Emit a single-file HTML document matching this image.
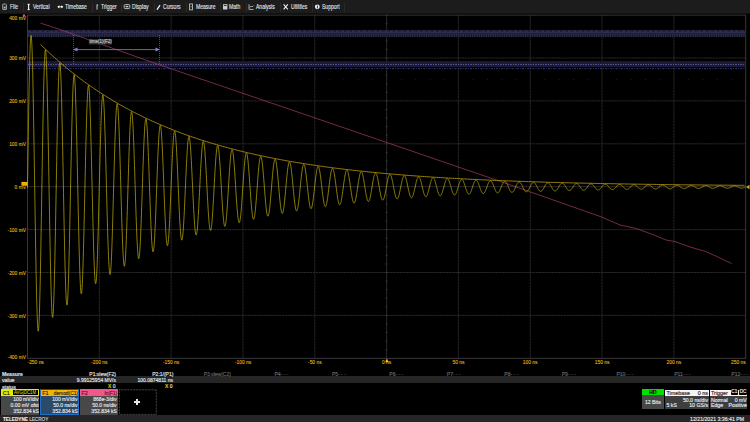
<!DOCTYPE html><html><head><meta charset="utf-8"><style>
*{margin:0;padding:0;box-sizing:border-box}
html,body{width:750px;height:422px;background:#000;overflow:hidden;font-family:"Liberation Sans",sans-serif}
.a{position:absolute;white-space:nowrap;-webkit-text-stroke:0.15px currentColor}
#menu{position:absolute;left:0;top:0;width:750px;height:13px;background:#1c1c1c}
.mi{position:absolute;top:3.1px;font-size:6.8px;color:#e8ecf0;line-height:7px;transform:scaleX(0.74);-webkit-text-stroke:0.1px currentColor;transform-origin:0 0;white-space:nowrap}
.sep{position:absolute;top:2.5px;width:0.8px;height:9px;background:#2a2a2a}
.yl{position:absolute;font-size:4.9px;color:#e4b40c;-webkit-text-stroke:0.1px currentColor;text-align:right;width:30px;line-height:5px}
.xl{position:absolute;font-size:4.9px;color:#e4b40c;-webkit-text-stroke:0.1px currentColor;text-align:center;width:40px;line-height:5px;top:360.2px}
.mt{position:absolute;font-size:5px;line-height:6px;color:#e4e8ee;-webkit-text-stroke:0.15px currentColor;text-align:right;white-space:nowrap}
</style></head><body><svg width="750" height="422" style="position:absolute;left:0;top:0"><line x1="99.32" y1="15.1" x2="99.32" y2="358.3" stroke="#2a2a2a" stroke-width="0.9" stroke-dasharray="2.6 0.5"/><line x1="171.14" y1="15.1" x2="171.14" y2="358.3" stroke="#2a2a2a" stroke-width="0.9" stroke-dasharray="2.6 0.5"/><line x1="242.96" y1="15.1" x2="242.96" y2="358.3" stroke="#2a2a2a" stroke-width="0.9" stroke-dasharray="2.6 0.5"/><line x1="314.78" y1="15.1" x2="314.78" y2="358.3" stroke="#2a2a2a" stroke-width="0.9" stroke-dasharray="2.6 0.5"/><line x1="386.60" y1="15.1" x2="386.60" y2="358.3" stroke="#2e2e2e" stroke-width="0.9"/><line x1="458.42" y1="15.1" x2="458.42" y2="358.3" stroke="#2a2a2a" stroke-width="0.9" stroke-dasharray="2.6 0.5"/><line x1="530.24" y1="15.1" x2="530.24" y2="358.3" stroke="#2a2a2a" stroke-width="0.9" stroke-dasharray="2.6 0.5"/><line x1="602.06" y1="15.1" x2="602.06" y2="358.3" stroke="#2a2a2a" stroke-width="0.9" stroke-dasharray="2.6 0.5"/><line x1="673.88" y1="15.1" x2="673.88" y2="358.3" stroke="#2a2a2a" stroke-width="0.9" stroke-dasharray="2.6 0.5"/><line x1="27.5" y1="58.00" x2="745.7" y2="58.00" stroke="#2a2a2a" stroke-width="0.9" stroke-dasharray="2.6 0.5"/><line x1="27.5" y1="100.90" x2="745.7" y2="100.90" stroke="#2a2a2a" stroke-width="0.9" stroke-dasharray="2.6 0.5"/><line x1="27.5" y1="143.80" x2="745.7" y2="143.80" stroke="#2a2a2a" stroke-width="0.9" stroke-dasharray="2.6 0.5"/><line x1="27.5" y1="186.70" x2="745.7" y2="186.70" stroke="#2e2e2e" stroke-width="0.9"/><line x1="27.5" y1="229.60" x2="745.7" y2="229.60" stroke="#2a2a2a" stroke-width="0.9" stroke-dasharray="2.6 0.5"/><line x1="27.5" y1="272.50" x2="745.7" y2="272.50" stroke="#2a2a2a" stroke-width="0.9" stroke-dasharray="2.6 0.5"/><line x1="27.5" y1="315.40" x2="745.7" y2="315.40" stroke="#2a2a2a" stroke-width="0.9" stroke-dasharray="2.6 0.5"/><line x1="27.50" y1="185.40" x2="27.50" y2="188.00" stroke="#3a3a3a" stroke-width="0.6"/><line x1="41.86" y1="185.40" x2="41.86" y2="188.00" stroke="#3a3a3a" stroke-width="0.6"/><line x1="56.23" y1="185.40" x2="56.23" y2="188.00" stroke="#3a3a3a" stroke-width="0.6"/><line x1="70.59" y1="185.40" x2="70.59" y2="188.00" stroke="#3a3a3a" stroke-width="0.6"/><line x1="84.96" y1="185.40" x2="84.96" y2="188.00" stroke="#3a3a3a" stroke-width="0.6"/><line x1="99.32" y1="185.40" x2="99.32" y2="188.00" stroke="#3a3a3a" stroke-width="0.6"/><line x1="113.68" y1="185.40" x2="113.68" y2="188.00" stroke="#3a3a3a" stroke-width="0.6"/><line x1="128.05" y1="185.40" x2="128.05" y2="188.00" stroke="#3a3a3a" stroke-width="0.6"/><line x1="142.41" y1="185.40" x2="142.41" y2="188.00" stroke="#3a3a3a" stroke-width="0.6"/><line x1="156.78" y1="185.40" x2="156.78" y2="188.00" stroke="#3a3a3a" stroke-width="0.6"/><line x1="171.14" y1="185.40" x2="171.14" y2="188.00" stroke="#3a3a3a" stroke-width="0.6"/><line x1="185.50" y1="185.40" x2="185.50" y2="188.00" stroke="#3a3a3a" stroke-width="0.6"/><line x1="199.87" y1="185.40" x2="199.87" y2="188.00" stroke="#3a3a3a" stroke-width="0.6"/><line x1="214.23" y1="185.40" x2="214.23" y2="188.00" stroke="#3a3a3a" stroke-width="0.6"/><line x1="228.60" y1="185.40" x2="228.60" y2="188.00" stroke="#3a3a3a" stroke-width="0.6"/><line x1="242.96" y1="185.40" x2="242.96" y2="188.00" stroke="#3a3a3a" stroke-width="0.6"/><line x1="257.32" y1="185.40" x2="257.32" y2="188.00" stroke="#3a3a3a" stroke-width="0.6"/><line x1="271.69" y1="185.40" x2="271.69" y2="188.00" stroke="#3a3a3a" stroke-width="0.6"/><line x1="286.05" y1="185.40" x2="286.05" y2="188.00" stroke="#3a3a3a" stroke-width="0.6"/><line x1="300.42" y1="185.40" x2="300.42" y2="188.00" stroke="#3a3a3a" stroke-width="0.6"/><line x1="314.78" y1="185.40" x2="314.78" y2="188.00" stroke="#3a3a3a" stroke-width="0.6"/><line x1="329.14" y1="185.40" x2="329.14" y2="188.00" stroke="#3a3a3a" stroke-width="0.6"/><line x1="343.51" y1="185.40" x2="343.51" y2="188.00" stroke="#3a3a3a" stroke-width="0.6"/><line x1="357.87" y1="185.40" x2="357.87" y2="188.00" stroke="#3a3a3a" stroke-width="0.6"/><line x1="372.24" y1="185.40" x2="372.24" y2="188.00" stroke="#3a3a3a" stroke-width="0.6"/><line x1="386.60" y1="185.40" x2="386.60" y2="188.00" stroke="#3a3a3a" stroke-width="0.6"/><line x1="400.96" y1="185.40" x2="400.96" y2="188.00" stroke="#3a3a3a" stroke-width="0.6"/><line x1="415.33" y1="185.40" x2="415.33" y2="188.00" stroke="#3a3a3a" stroke-width="0.6"/><line x1="429.69" y1="185.40" x2="429.69" y2="188.00" stroke="#3a3a3a" stroke-width="0.6"/><line x1="444.06" y1="185.40" x2="444.06" y2="188.00" stroke="#3a3a3a" stroke-width="0.6"/><line x1="458.42" y1="185.40" x2="458.42" y2="188.00" stroke="#3a3a3a" stroke-width="0.6"/><line x1="472.78" y1="185.40" x2="472.78" y2="188.00" stroke="#3a3a3a" stroke-width="0.6"/><line x1="487.15" y1="185.40" x2="487.15" y2="188.00" stroke="#3a3a3a" stroke-width="0.6"/><line x1="501.51" y1="185.40" x2="501.51" y2="188.00" stroke="#3a3a3a" stroke-width="0.6"/><line x1="515.88" y1="185.40" x2="515.88" y2="188.00" stroke="#3a3a3a" stroke-width="0.6"/><line x1="530.24" y1="185.40" x2="530.24" y2="188.00" stroke="#3a3a3a" stroke-width="0.6"/><line x1="544.60" y1="185.40" x2="544.60" y2="188.00" stroke="#3a3a3a" stroke-width="0.6"/><line x1="558.97" y1="185.40" x2="558.97" y2="188.00" stroke="#3a3a3a" stroke-width="0.6"/><line x1="573.33" y1="185.40" x2="573.33" y2="188.00" stroke="#3a3a3a" stroke-width="0.6"/><line x1="587.70" y1="185.40" x2="587.70" y2="188.00" stroke="#3a3a3a" stroke-width="0.6"/><line x1="602.06" y1="185.40" x2="602.06" y2="188.00" stroke="#3a3a3a" stroke-width="0.6"/><line x1="616.42" y1="185.40" x2="616.42" y2="188.00" stroke="#3a3a3a" stroke-width="0.6"/><line x1="630.79" y1="185.40" x2="630.79" y2="188.00" stroke="#3a3a3a" stroke-width="0.6"/><line x1="645.15" y1="185.40" x2="645.15" y2="188.00" stroke="#3a3a3a" stroke-width="0.6"/><line x1="659.52" y1="185.40" x2="659.52" y2="188.00" stroke="#3a3a3a" stroke-width="0.6"/><line x1="673.88" y1="185.40" x2="673.88" y2="188.00" stroke="#3a3a3a" stroke-width="0.6"/><line x1="688.24" y1="185.40" x2="688.24" y2="188.00" stroke="#3a3a3a" stroke-width="0.6"/><line x1="702.61" y1="185.40" x2="702.61" y2="188.00" stroke="#3a3a3a" stroke-width="0.6"/><line x1="716.97" y1="185.40" x2="716.97" y2="188.00" stroke="#3a3a3a" stroke-width="0.6"/><line x1="731.34" y1="185.40" x2="731.34" y2="188.00" stroke="#3a3a3a" stroke-width="0.6"/><line x1="745.70" y1="185.40" x2="745.70" y2="188.00" stroke="#3a3a3a" stroke-width="0.6"/><line x1="385.30" y1="15.10" x2="387.90" y2="15.10" stroke="#3a3a3a" stroke-width="0.6"/><line x1="385.30" y1="23.68" x2="387.90" y2="23.68" stroke="#3a3a3a" stroke-width="0.6"/><line x1="385.30" y1="32.26" x2="387.90" y2="32.26" stroke="#3a3a3a" stroke-width="0.6"/><line x1="385.30" y1="40.84" x2="387.90" y2="40.84" stroke="#3a3a3a" stroke-width="0.6"/><line x1="385.30" y1="49.42" x2="387.90" y2="49.42" stroke="#3a3a3a" stroke-width="0.6"/><line x1="385.30" y1="58.00" x2="387.90" y2="58.00" stroke="#3a3a3a" stroke-width="0.6"/><line x1="385.30" y1="66.58" x2="387.90" y2="66.58" stroke="#3a3a3a" stroke-width="0.6"/><line x1="385.30" y1="75.16" x2="387.90" y2="75.16" stroke="#3a3a3a" stroke-width="0.6"/><line x1="385.30" y1="83.74" x2="387.90" y2="83.74" stroke="#3a3a3a" stroke-width="0.6"/><line x1="385.30" y1="92.32" x2="387.90" y2="92.32" stroke="#3a3a3a" stroke-width="0.6"/><line x1="385.30" y1="100.90" x2="387.90" y2="100.90" stroke="#3a3a3a" stroke-width="0.6"/><line x1="385.30" y1="109.48" x2="387.90" y2="109.48" stroke="#3a3a3a" stroke-width="0.6"/><line x1="385.30" y1="118.06" x2="387.90" y2="118.06" stroke="#3a3a3a" stroke-width="0.6"/><line x1="385.30" y1="126.64" x2="387.90" y2="126.64" stroke="#3a3a3a" stroke-width="0.6"/><line x1="385.30" y1="135.22" x2="387.90" y2="135.22" stroke="#3a3a3a" stroke-width="0.6"/><line x1="385.30" y1="143.80" x2="387.90" y2="143.80" stroke="#3a3a3a" stroke-width="0.6"/><line x1="385.30" y1="152.38" x2="387.90" y2="152.38" stroke="#3a3a3a" stroke-width="0.6"/><line x1="385.30" y1="160.96" x2="387.90" y2="160.96" stroke="#3a3a3a" stroke-width="0.6"/><line x1="385.30" y1="169.54" x2="387.90" y2="169.54" stroke="#3a3a3a" stroke-width="0.6"/><line x1="385.30" y1="178.12" x2="387.90" y2="178.12" stroke="#3a3a3a" stroke-width="0.6"/><line x1="385.30" y1="186.70" x2="387.90" y2="186.70" stroke="#3a3a3a" stroke-width="0.6"/><line x1="385.30" y1="195.28" x2="387.90" y2="195.28" stroke="#3a3a3a" stroke-width="0.6"/><line x1="385.30" y1="203.86" x2="387.90" y2="203.86" stroke="#3a3a3a" stroke-width="0.6"/><line x1="385.30" y1="212.44" x2="387.90" y2="212.44" stroke="#3a3a3a" stroke-width="0.6"/><line x1="385.30" y1="221.02" x2="387.90" y2="221.02" stroke="#3a3a3a" stroke-width="0.6"/><line x1="385.30" y1="229.60" x2="387.90" y2="229.60" stroke="#3a3a3a" stroke-width="0.6"/><line x1="385.30" y1="238.18" x2="387.90" y2="238.18" stroke="#3a3a3a" stroke-width="0.6"/><line x1="385.30" y1="246.76" x2="387.90" y2="246.76" stroke="#3a3a3a" stroke-width="0.6"/><line x1="385.30" y1="255.34" x2="387.90" y2="255.34" stroke="#3a3a3a" stroke-width="0.6"/><line x1="385.30" y1="263.92" x2="387.90" y2="263.92" stroke="#3a3a3a" stroke-width="0.6"/><line x1="385.30" y1="272.50" x2="387.90" y2="272.50" stroke="#3a3a3a" stroke-width="0.6"/><line x1="385.30" y1="281.08" x2="387.90" y2="281.08" stroke="#3a3a3a" stroke-width="0.6"/><line x1="385.30" y1="289.66" x2="387.90" y2="289.66" stroke="#3a3a3a" stroke-width="0.6"/><line x1="385.30" y1="298.24" x2="387.90" y2="298.24" stroke="#3a3a3a" stroke-width="0.6"/><line x1="385.30" y1="306.82" x2="387.90" y2="306.82" stroke="#3a3a3a" stroke-width="0.6"/><line x1="385.30" y1="315.40" x2="387.90" y2="315.40" stroke="#3a3a3a" stroke-width="0.6"/><line x1="385.30" y1="323.98" x2="387.90" y2="323.98" stroke="#3a3a3a" stroke-width="0.6"/><line x1="385.30" y1="332.56" x2="387.90" y2="332.56" stroke="#3a3a3a" stroke-width="0.6"/><line x1="385.30" y1="341.14" x2="387.90" y2="341.14" stroke="#3a3a3a" stroke-width="0.6"/><line x1="385.30" y1="349.72" x2="387.90" y2="349.72" stroke="#3a3a3a" stroke-width="0.6"/><line x1="385.30" y1="358.30" x2="387.90" y2="358.30" stroke="#3a3a3a" stroke-width="0.6"/><line x1="27.5" y1="79.4" x2="745.7" y2="79.4" stroke="#262626" stroke-width="0.9" stroke-dasharray="0.9 13.46"/><rect x="27.5" y="15.1" width="718.20" height="343.20" fill="none" stroke="#3c3c3c" stroke-width="0.9"/><rect x="28.0" y="29.9" width="717.20" height="7.2" fill="#16162a"/><line x1="28.0" y1="31.2" x2="745.2" y2="31.2" stroke="#2e2e4e" stroke-width="2.1" stroke-dasharray="3 0.8 0.8 0.8"/><line x1="28.0" y1="32.8" x2="745.2" y2="32.8" stroke="#36365a" stroke-width="1"/><line x1="28.0" y1="35.2" x2="745.2" y2="35.2" stroke="#2c2c4c" stroke-width="3.0" stroke-dasharray="1.3 1.0"/><rect x="28.0" y="61.1" width="717.20" height="6.0" fill="#1a1a34"/><line x1="28.0" y1="64.5" x2="745.2" y2="64.5" stroke="#5a5a98" stroke-width="1" stroke-dasharray="1 1.2 1.6 1.2"/><line x1="28.0" y1="68.6" x2="745.2" y2="68.6" stroke="#3e3e84" stroke-width="0.9" stroke-dasharray="2 1.2 0.8 1.2"/><polyline fill="none" stroke="#b03f72" stroke-width="0.65" points="40.6,23.1 60.0,29.5 150.0,61.6 300.0,112.8 386.7,142.5 500.0,181.3 600.0,216.4 620.0,225.0 636.0,228.4 654.0,235.0 666.0,240.0 675.0,241.6 690.0,247.0 706.0,251.6 720.0,258.0 731.6,263.6"/><polyline fill="none" stroke="#c0b008" stroke-width="0.72" points="27.50,187.77 27.70,174.19 27.90,160.75 28.10,147.55 28.30,134.69 28.50,122.26 28.70,110.36 28.90,99.09 29.10,88.51 29.30,78.72 29.50,69.78 29.70,61.77 29.90,54.74 30.10,48.73 30.30,43.81 30.50,39.99 30.70,37.30 30.90,35.77 31.10,35.40 31.30,36.19 31.50,38.13 31.70,41.21 31.90,45.39 32.10,50.64 32.30,56.93 32.50,64.18 32.70,72.36 32.90,81.40 33.10,91.21 33.30,101.73 33.50,112.88 33.70,124.56 33.90,136.68 34.10,149.16 34.30,161.89 34.50,174.78 34.70,187.73 34.90,200.63 35.10,213.40 35.30,225.92 35.50,238.12 35.70,249.89 35.90,261.14 36.10,271.80 36.30,281.78 36.50,291.01 36.70,299.41 36.90,306.93 37.10,313.52 37.30,319.11 37.50,323.69 37.70,327.20 37.90,329.63 38.10,330.96 38.30,331.19 38.50,330.31 38.70,328.34 38.90,325.30 39.10,321.20 39.30,316.09 39.50,310.01 39.70,303.00 39.90,295.13 40.10,286.45 40.30,277.03 40.50,266.95 40.70,256.29 40.90,245.12 41.10,233.55 41.30,221.64 41.50,209.51 41.70,197.24 41.90,184.92 42.10,172.66 42.30,160.53 42.50,148.65 42.70,137.09 42.90,125.94 43.10,115.30 43.30,105.23 43.50,95.81 43.70,87.12 43.90,79.21 44.10,72.16 44.30,66.00 44.50,60.78 44.70,56.54 44.90,53.32 45.10,51.12 45.30,49.97 45.50,49.87 45.70,50.82 45.90,52.81 46.10,55.82 46.30,59.83 46.50,64.80 46.70,70.69 46.90,77.45 47.10,85.03 47.30,93.37 47.50,102.40 47.70,112.06 47.90,122.26 48.10,132.93 48.30,143.98 48.50,155.33 48.70,166.89 48.90,178.58 49.10,190.29 49.30,201.95 49.50,213.46 49.70,224.74 49.90,235.70 50.10,246.25 50.30,256.32 50.50,265.83 50.70,274.72 50.90,282.90 51.10,290.34 51.30,296.96 51.50,302.72 51.70,307.58 51.90,311.50 52.10,314.46 52.30,316.44 52.50,317.42 52.70,317.40 52.90,316.38 53.10,314.38 53.30,311.41 53.50,307.49 53.70,302.67 53.90,296.97 54.10,290.45 54.30,283.15 54.50,275.14 54.70,266.47 54.90,257.23 55.10,247.47 55.30,237.27 55.50,226.72 55.70,215.90 55.90,204.88 56.10,193.76 56.30,182.62 56.50,171.54 56.70,160.61 56.90,149.91 57.10,139.53 57.30,129.53 57.50,120.01 57.70,111.02 57.90,102.64 58.10,94.93 58.30,87.95 58.50,81.74 58.70,76.35 58.90,71.83 59.10,68.20 59.30,65.49 59.50,63.71 59.70,62.88 59.90,63.01 60.10,64.08 60.30,66.09 60.50,69.02 60.70,72.85 60.90,77.53 61.10,83.04 61.30,89.34 61.50,96.36 61.70,104.05 61.90,112.36 62.10,121.21 62.30,130.55 62.50,140.29 62.70,150.36 62.90,160.68 63.10,171.18 63.30,181.76 63.50,192.36 63.70,202.89 63.90,213.27 64.10,223.41 64.30,233.25 64.50,242.71 64.70,251.72 64.90,260.20 65.10,268.11 65.30,275.37 65.50,281.93 65.70,287.75 65.90,292.79 66.10,297.00 66.30,300.35 66.50,302.83 66.70,304.42 66.90,305.10 67.10,304.88 67.30,303.76 67.50,301.75 67.70,298.87 67.90,295.13 68.10,290.59 68.30,285.26 68.50,279.19 68.70,272.44 68.90,265.05 69.10,257.08 69.30,248.61 69.50,239.68 69.70,230.37 69.90,220.76 70.10,210.92 70.30,200.92 70.50,190.85 70.70,180.77 70.90,170.77 71.10,160.91 71.30,151.29 71.50,141.97 71.70,133.01 71.90,124.50 72.10,116.48 72.30,109.03 72.50,102.20 72.70,96.03 72.90,90.58 73.10,85.87 73.30,81.96 73.50,78.86 73.70,76.59 73.90,75.18 74.10,74.63 74.30,74.93 74.50,76.10 74.70,78.10 74.90,80.94 75.10,84.58 75.30,88.99 75.50,94.14 75.70,99.99 75.90,106.48 76.10,113.58 76.30,121.21 76.50,129.33 76.70,137.86 76.90,146.75 77.10,155.92 77.30,165.31 77.50,174.83 77.70,184.42 77.90,194.00 78.10,203.51 78.30,212.86 78.50,221.98 78.70,230.82 78.90,239.29 79.10,247.34 79.30,254.91 79.50,261.93 79.70,268.37 79.90,274.16 80.10,279.27 80.30,283.66 80.50,287.30 80.70,290.16 80.90,292.22 81.10,293.48 81.30,293.91 81.50,293.53 81.70,292.33 81.90,290.33 82.10,287.54 82.30,284.00 82.50,279.72 82.70,274.74 82.90,269.11 83.10,262.87 83.30,256.06 83.50,248.74 83.70,240.97 83.90,232.81 84.10,224.32 84.30,215.57 84.50,206.62 84.70,197.55 84.90,188.43 85.10,179.31 85.30,170.29 85.50,161.41 85.70,152.76 85.90,144.39 86.10,136.37 86.30,128.76 86.50,121.62 86.70,115.00 86.90,108.94 87.10,103.50 87.30,98.72 87.50,94.62 87.70,91.24 87.90,88.60 88.10,86.73 88.30,85.62 88.50,85.30 88.70,85.75 88.90,86.97 89.10,88.96 89.30,91.69 89.50,95.15 89.70,99.29 89.90,104.10 90.10,109.53 90.30,115.53 90.50,122.07 90.70,129.08 90.90,136.51 91.10,144.32 91.30,152.42 91.50,160.77 91.70,169.30 91.90,177.94 92.10,186.62 92.30,195.28 92.50,203.86 92.70,212.28 92.90,220.48 93.10,228.41 93.30,236.00 93.50,243.19 93.70,249.93 93.90,256.17 94.10,261.87 94.30,266.97 94.50,271.46 94.70,275.28 94.90,278.41 95.10,280.84 95.30,282.55 95.50,283.51 95.70,283.74 95.90,283.23 96.10,281.98 96.30,280.01 96.50,277.33 96.70,273.97 96.90,269.95 97.10,265.31 97.30,260.09 97.50,254.31 97.70,248.04 97.90,241.33 98.10,234.21 98.30,226.75 98.50,219.01 98.70,211.05 98.90,202.92 99.10,194.69 99.30,186.43 99.50,178.20 99.70,170.05 99.90,162.06 100.10,154.28 100.30,146.78 100.50,139.60 100.70,132.80 100.90,126.44 101.10,120.56 101.30,115.20 101.50,110.41 101.70,106.22 101.90,102.65 102.10,99.74 102.30,97.51 102.50,95.97 102.70,95.13 102.90,94.99 103.10,95.56 103.30,96.82 103.50,98.77 103.70,101.40 103.90,104.66 104.10,108.55 104.30,113.03 104.50,118.07 104.70,123.61 104.90,129.63 105.10,136.06 105.30,142.87 105.50,150.00 105.70,157.39 105.90,164.99 106.10,172.73 106.30,180.56 106.50,188.42 106.70,196.25 106.90,203.98 107.10,211.57 107.30,218.94 107.50,226.05 107.70,232.84 107.90,239.26 108.10,245.26 108.30,250.81 108.50,255.84 108.70,260.34 108.90,264.26 109.10,267.58 109.30,270.28 109.50,272.33 109.70,273.72 109.90,274.45 110.10,274.50 110.30,273.89 110.50,272.61 110.70,270.68 110.90,268.12 111.10,264.94 111.30,261.18 111.50,256.85 111.70,252.01 111.90,246.68 112.10,240.91 112.30,234.74 112.50,228.23 112.70,221.42 112.90,214.36 113.10,207.12 113.30,199.74 113.50,192.28 113.70,184.81 113.90,177.37 114.10,170.02 114.30,162.83 114.50,155.84 114.70,149.11 114.90,142.69 115.10,136.62 115.30,130.96 115.50,125.74 115.70,121.00 115.90,116.78 116.10,113.11 116.30,110.02 116.50,107.52 116.70,105.64 116.90,104.39 117.10,103.77 117.30,103.79 117.50,104.45 117.70,105.73 117.90,107.64 118.10,110.14 118.30,113.23 118.50,116.87 118.70,121.04 118.90,125.70 119.10,130.82 119.30,136.36 119.50,142.26 119.70,148.49 119.90,155.00 120.10,161.74 120.30,168.65 120.50,175.68 120.70,182.78 120.90,189.89 121.10,196.96 121.30,203.93 121.50,210.75 121.70,217.38 121.90,223.75 122.10,229.82 122.30,235.55 122.50,240.90 122.70,245.81 122.90,250.26 123.10,254.22 123.30,257.65 123.50,260.53 123.70,262.84 123.90,264.56 124.10,265.69 124.30,266.21 124.50,266.12 124.70,265.43 124.90,264.14 125.10,262.26 125.30,259.81 125.50,256.81 125.70,253.29 125.90,249.27 126.10,244.79 126.30,239.87 126.50,234.56 126.70,228.91 126.90,222.95 127.10,216.73 127.30,210.30 127.50,203.71 127.70,197.01 127.90,190.26 128.10,183.49 128.30,176.78 128.50,170.16 128.70,163.68 128.90,157.41 129.10,151.37 129.30,145.63 129.50,140.22 129.70,135.18 129.90,130.55 130.10,126.37 130.30,122.66 130.50,119.46 130.70,116.78 130.90,114.64 131.10,113.07 131.30,112.06 131.50,111.63 131.70,111.78 131.90,112.50 132.10,113.79 132.30,115.64 132.50,118.03 132.70,120.94 132.90,124.34 133.10,128.22 133.30,132.53 133.50,137.25 133.70,142.34 133.90,147.76 134.10,153.46 134.30,159.40 134.50,165.53 134.70,171.81 134.90,178.20 135.10,184.63 135.30,191.06 135.50,197.44 135.70,203.72 135.90,209.86 136.10,215.81 136.30,221.52 136.50,226.95 136.70,232.06 136.90,236.81 137.10,241.17 137.30,245.10 137.50,248.57 137.70,251.57 137.90,254.06 138.10,256.03 138.30,257.47 138.50,258.36 138.70,258.71 138.90,258.51 139.10,257.76 139.30,256.47 139.50,254.66 139.70,252.33 139.90,249.51 140.10,246.21 140.30,242.48 140.50,238.33 140.70,233.80 140.90,228.92 141.10,223.74 141.30,218.29 141.50,212.61 141.70,206.76 141.90,200.77 142.10,194.69 142.30,188.57 142.50,182.45 142.70,176.39 142.90,170.43 143.10,164.60 143.30,158.97 143.50,153.56 143.70,148.43 143.90,143.61 144.10,139.13 144.30,135.03 144.50,131.34 144.70,128.08 144.90,125.29 145.10,122.97 145.30,121.15 145.50,119.84 145.70,119.05 145.90,118.78 146.10,119.03 146.30,119.80 146.50,121.08 146.70,122.86 146.90,125.13 147.10,127.87 147.30,131.05 147.50,134.65 147.70,138.64 147.90,142.99 148.10,147.66 148.30,152.62 148.50,157.83 148.70,163.25 148.90,168.84 149.10,174.55 149.30,180.34 149.50,186.16 149.70,191.98 149.90,197.74 150.10,203.40 150.30,208.92 150.50,214.26 150.70,219.37 150.90,224.22 151.10,228.78 151.30,233.00 151.50,236.86 151.70,240.32 151.90,243.37 152.10,245.98 152.30,248.13 152.50,249.81 152.70,251.00 152.90,251.70 153.10,251.90 153.30,251.61 153.50,250.82 153.70,249.54 153.90,247.79 154.10,245.58 154.30,242.93 154.50,239.86 154.70,236.39 154.90,232.56 155.10,228.38 155.30,223.90 155.50,219.16 155.70,214.17 155.90,209.00 156.10,203.67 156.30,198.23 156.50,192.71 156.70,187.17 156.90,181.65 157.10,176.17 157.30,170.80 157.50,165.57 157.70,160.51 157.90,155.67 158.10,151.09 158.30,146.79 158.50,142.81 158.70,139.18 158.90,135.93 159.10,133.07 159.30,130.64 159.50,128.64 159.70,127.10 159.90,126.02 160.10,125.41 160.30,125.27 160.50,125.60 160.70,126.40 160.90,127.67 161.10,129.38 161.30,131.53 161.50,134.10 161.70,137.07 161.90,140.40 162.10,144.09 162.30,148.10 162.50,152.39 162.70,156.93 162.90,161.69 163.10,166.64 163.30,171.72 163.50,176.91 163.70,182.16 163.90,187.43 164.10,192.68 164.30,197.88 164.50,202.98 164.70,207.94 164.90,212.73 165.10,217.31 165.30,221.64 165.50,225.69 165.70,229.44 165.90,232.86 166.10,235.91 166.30,238.58 166.50,240.85 166.70,242.70 166.90,244.12 167.10,245.10 167.30,245.63 167.50,245.71 167.70,245.35 167.90,244.53 168.10,243.28 168.30,241.60 168.50,239.51 168.70,237.03 168.90,234.16 169.10,230.95 169.30,227.41 169.50,223.56 169.70,219.45 169.90,215.10 170.10,210.55 170.30,205.83 170.50,200.99 170.70,196.04 170.90,191.04 171.10,186.03 171.30,181.03 171.50,176.10 171.70,171.26 171.90,166.56 172.10,162.02 172.30,157.69 172.50,153.60 172.70,149.77 172.90,146.24 173.10,143.03 173.30,140.16 173.50,137.67 173.70,135.55 173.90,133.84 174.10,132.53 174.30,131.65 174.50,131.19 174.70,131.16 174.90,131.56 175.10,132.38 175.30,133.62 175.50,135.26 175.70,137.29 175.90,139.70 176.10,142.46 176.30,145.56 176.50,148.96 176.70,152.64 176.90,156.58 177.10,160.74 177.30,165.09 177.50,169.60 177.70,174.22 177.90,178.93 178.10,183.69 178.30,188.46 178.50,193.21 178.70,197.89 178.90,202.48 179.10,206.94 179.30,211.23 179.50,215.33 179.70,219.20 179.90,222.81 180.10,226.13 180.30,229.15 180.50,231.84 180.70,234.18 180.90,236.15 181.10,237.73 181.30,238.93 181.50,239.73 181.70,240.12 181.90,240.10 182.10,239.67 182.30,238.85 182.50,237.63 182.70,236.02 182.90,234.05 183.10,231.72 183.30,229.06 183.50,226.08 183.70,222.81 183.90,219.27 184.10,215.50 184.30,211.52 184.50,207.37 184.70,203.07 184.90,198.66 185.10,194.17 185.30,189.64 185.50,185.10 185.70,180.59 185.90,176.14 186.10,171.79 186.30,167.56 186.50,163.50 186.70,159.63 186.90,155.97 187.10,152.57 187.30,149.43 187.50,146.60 187.70,144.08 187.90,141.89 188.10,140.06 188.30,138.59 188.50,137.49 188.70,136.78 188.90,136.45 189.10,136.51 189.30,136.96 189.50,137.79 189.70,138.99 189.90,140.56 190.10,142.47 190.30,144.73 190.50,147.30 190.70,150.16 190.90,153.30 191.10,156.69 191.30,160.30 191.50,164.11 191.70,168.08 191.90,172.18 192.10,176.39 192.30,180.66 192.50,184.98 192.70,189.29 192.90,193.58 193.10,197.80 193.30,201.93 193.50,205.93 193.70,209.78 193.90,213.44 194.10,216.89 194.30,220.11 194.50,223.06 194.70,225.72 194.90,228.08 195.10,230.13 195.30,231.83 195.50,233.19 195.70,234.19 195.90,234.83 196.10,235.10 196.30,235.00 196.50,234.53 196.70,233.70 196.90,232.52 197.10,230.99 197.30,229.13 197.50,226.95 197.70,224.48 197.90,221.72 198.10,218.71 198.30,215.46 198.50,212.00 198.70,208.36 198.90,204.57 199.10,200.65 199.30,196.64 199.50,192.57 199.70,188.46 199.90,184.36 200.10,180.29 200.30,176.28 200.50,172.36 200.70,168.57 200.90,164.93 201.10,161.46 201.30,158.21 201.50,155.18 201.70,152.40 201.90,149.90 202.10,147.68 202.30,145.78 202.50,144.19 202.70,142.93 202.90,142.02 203.10,141.45 203.30,141.24 203.50,141.37 203.70,141.85 203.90,142.68 204.10,143.84 204.30,145.33 204.50,147.14 204.70,149.24 204.90,151.63 205.10,154.28 205.30,157.17 205.50,160.29 205.70,163.60 205.90,167.08 206.10,170.70 206.30,174.44 206.50,178.26 206.70,182.14 206.90,186.05 207.10,189.95 207.30,193.82 207.50,197.62 207.70,201.34 207.90,204.93 208.10,208.38 208.30,211.65 208.50,214.73 208.70,217.58 208.90,220.20 209.10,222.55 209.30,224.62 209.50,226.40 209.70,227.88 209.90,229.03 210.10,229.87 210.30,230.37 210.50,230.54 210.70,230.37 210.90,229.88 211.10,229.05 211.30,227.91 211.50,226.46 211.70,224.71 211.90,222.68 212.10,220.38 212.30,217.83 212.50,215.05 212.70,212.06 212.90,208.90 213.10,205.57 213.30,202.11 213.50,198.54 213.70,194.90 213.90,191.20 214.10,187.49 214.30,183.78 214.50,180.10 214.70,176.49 214.90,172.97 215.10,169.56 215.30,166.30 215.50,163.21 215.70,160.31 215.90,157.61 216.10,155.15 216.30,152.95 216.50,151.00 216.70,149.34 216.90,147.97 217.10,146.91 217.30,146.15 217.50,145.71 217.70,145.58 217.90,145.78 218.10,146.28 218.30,147.10 218.50,148.22 218.70,149.63 218.90,151.33 219.10,153.29 219.30,155.51 219.50,157.96 219.70,160.63 219.90,163.49 220.10,166.52 220.30,169.70 220.50,173.00 220.70,176.41 220.90,179.88 221.10,183.40 221.30,186.93 221.50,190.46 221.70,193.95 221.90,197.38 222.10,200.72 222.30,203.94 222.50,207.03 222.70,209.95 222.90,212.69 223.10,215.23 223.30,217.54 223.50,219.62 223.70,221.43 223.90,222.98 224.10,224.25 224.30,225.24 224.50,225.92 224.70,226.31 224.90,226.39 225.10,226.18 225.30,225.66 225.50,224.85 225.70,223.75 225.90,222.38 226.10,220.74 226.30,218.84 226.50,216.71 226.70,214.35 226.90,211.79 227.10,209.05 227.30,206.15 227.50,203.11 227.70,199.96 227.90,196.71 228.10,193.40 228.30,190.05 228.50,186.68 228.70,183.33 228.90,180.02 229.10,176.76 229.30,173.60 229.50,170.55 229.70,167.63 229.90,164.86 230.10,162.28 230.30,159.89 230.50,157.71 230.70,155.76 230.90,154.06 231.10,152.62 231.30,151.44 231.50,150.54 231.70,149.92 231.90,149.58 232.10,149.53 232.30,149.77 232.50,150.29 232.70,151.10 232.90,152.17 233.10,153.51 233.30,155.10 233.50,156.93 233.70,158.98 233.90,161.25 234.10,163.70 234.30,166.32 234.50,169.10 234.70,172.01 234.90,175.02 235.10,178.11 235.30,181.27 235.50,184.46 235.70,187.66 235.90,190.85 236.10,193.99 236.30,197.08 236.50,200.08 236.70,202.97 236.90,205.73 237.10,208.35 237.30,210.79 237.50,213.04 237.70,215.08 237.90,216.91 238.10,218.50 238.30,219.85 238.50,220.94 238.70,221.77 238.90,222.33 239.10,222.62 239.30,222.63 239.50,222.37 239.70,221.85 239.90,221.05 240.10,220.00 240.30,218.70 240.50,217.16 240.70,215.40 240.90,213.42 241.10,211.25 241.30,208.89 241.50,206.38 241.70,203.72 241.90,200.95 242.10,198.07 242.30,195.12 242.50,192.11 242.70,189.07 242.90,186.03 243.10,183.00 243.30,180.01 243.50,177.08 243.70,174.24 243.90,171.50 244.10,168.89 244.30,166.42 244.50,164.12 244.70,162.00 244.90,160.08 245.10,158.37 245.30,156.88 245.50,155.62 245.70,154.61 245.90,153.85 246.10,153.35 246.30,153.10 246.50,153.12 246.70,153.39 246.90,153.92 247.10,154.70 247.30,155.73 247.50,156.99 247.70,158.48 247.90,160.19 248.10,162.09 248.30,164.18 248.50,166.43 248.70,168.84 248.90,171.38 249.10,174.04 249.30,176.78 249.50,179.60 249.70,182.46 249.90,185.35 250.10,188.25 250.30,191.13 250.50,193.96 250.70,196.74 250.90,199.44 251.10,202.03 251.30,204.50 251.50,206.83 251.70,209.00 251.90,211.00 252.10,212.81 252.30,214.41 252.50,215.80 252.70,216.97 252.90,217.90 253.10,218.60 253.30,219.05 253.50,219.26 253.70,219.22 253.90,218.93 254.10,218.40 254.30,217.63 254.50,216.62 254.70,215.40 254.90,213.96 255.10,212.31 255.30,210.48 255.50,208.48 255.70,206.31 255.90,204.01 256.10,201.58 256.30,199.04 256.50,196.42 256.70,193.74 256.90,191.01 257.10,188.26 257.30,185.50 257.50,182.77 257.70,180.07 257.90,177.44 258.10,174.89 258.30,172.43 258.50,170.10 258.70,167.90 258.90,165.85 259.10,163.97 259.30,162.27 259.50,160.76 259.70,159.46 259.90,158.38 260.10,157.51 260.30,156.88 260.50,156.48 260.70,156.31 260.90,156.37 261.10,156.67 261.30,157.20 261.50,157.96 261.70,158.94 261.90,160.13 262.10,161.52 262.30,163.10 262.50,164.87 262.70,166.79 262.90,168.87 263.10,171.08 263.30,173.40 263.50,175.82 263.70,178.32 263.90,180.88 264.10,183.48 264.30,186.10 264.50,188.72 264.70,191.32 264.90,193.87 265.10,196.37 265.30,198.79 265.50,201.11 265.70,203.32 265.90,205.40 266.10,207.33 266.30,209.10 266.50,210.70 266.70,212.11 266.90,213.32 267.10,214.33 267.30,215.13 267.50,215.71 267.70,216.07 267.90,216.20 268.10,216.12 268.30,215.81 268.50,215.27 268.70,214.53 268.90,213.58 269.10,212.42 269.30,211.08 269.50,209.55 269.70,207.86 269.90,206.01 270.10,204.02 270.30,201.91 270.50,199.68 270.70,197.37 270.90,194.99 271.10,192.54 271.30,190.07 271.50,187.58 271.70,185.09 271.90,182.62 272.10,180.19 272.30,177.82 272.50,175.53 272.70,173.33 272.90,171.24 273.10,169.28 273.30,167.46 273.50,165.80 273.70,164.30 273.90,162.98 274.10,161.84 274.30,160.90 274.50,160.17 274.70,159.64 274.90,159.32 275.10,159.22 275.30,159.32 275.50,159.64 275.70,160.17 275.90,160.90 276.10,161.83 276.30,162.95 276.50,164.25 276.70,165.72 276.90,167.35 277.10,169.12 277.30,171.03 277.50,173.05 277.70,175.18 277.90,177.39 278.10,179.66 278.30,181.99 278.50,184.35 278.70,186.72 278.90,189.09 279.10,191.43 279.30,193.73 279.50,195.98 279.70,198.15 279.90,200.23 280.10,202.21 280.30,204.06 280.50,205.77 280.70,207.34 280.90,208.75 281.10,209.98 281.30,211.04 281.50,211.91 281.70,212.59 281.90,213.07 282.10,213.35 282.30,213.43 282.50,213.30 282.70,212.98 282.90,212.45 283.10,211.74 283.30,210.83 283.50,209.75 283.70,208.49 283.90,207.08 284.10,205.51 284.30,203.81 284.50,201.98 284.70,200.05 284.90,198.01 285.10,195.91 285.30,193.73 285.50,191.52 285.70,189.27 285.90,187.01 286.10,184.76 286.30,182.54 286.50,180.35 286.70,178.22 286.90,176.16 287.10,174.19 287.30,172.33 287.50,170.58 287.70,168.97 287.90,167.49 288.10,166.17 288.30,165.01 288.50,164.03 288.70,163.22 288.90,162.59 289.10,162.16 289.30,161.91 289.50,161.86 289.70,162.00 289.90,162.33 290.10,162.85 290.30,163.56 290.50,164.44 290.70,165.49 290.90,166.70 291.10,168.06 291.30,169.57 291.50,171.20 291.70,172.95 291.90,174.80 292.10,176.74 292.30,178.76 292.50,180.83 292.70,182.94 292.90,185.08 293.10,187.23 293.30,189.37 293.50,191.48 293.70,193.56 293.90,195.58 294.10,197.52 294.30,199.39 294.50,201.15 294.70,202.80 294.90,204.32 295.10,205.71 295.30,206.95 295.50,208.03 295.70,208.95 295.90,209.70 296.10,210.27 296.30,210.67 296.50,210.88 296.70,210.91 296.90,210.75 297.10,210.42 297.30,209.90 297.50,209.22 297.70,208.36 297.90,207.34 298.10,206.18 298.30,204.86 298.50,203.42 298.70,201.85 298.90,200.17 299.10,198.40 299.30,196.54 299.50,194.62 299.70,192.65 299.90,190.63 300.10,188.60 300.30,186.55 300.50,184.52 300.70,182.51 300.90,180.54 301.10,178.63 301.30,176.78 301.50,175.02 301.70,173.36 301.90,171.80 302.10,170.37 302.30,169.06 302.50,167.90 302.70,166.89 302.90,166.03 303.10,165.33 303.30,164.81 303.50,164.45 303.70,164.27 303.90,164.26 304.10,164.43 304.30,164.77 304.50,165.28 304.70,165.95 304.90,166.78 305.10,167.76 305.30,168.89 305.50,170.16 305.70,171.54 305.90,173.05 306.10,174.65 306.30,176.35 306.50,178.12 306.70,179.96 306.90,181.84 307.10,183.76 307.30,185.70 307.50,187.64 307.70,189.58 307.90,191.48 308.10,193.35 308.30,195.16 308.50,196.91 308.70,198.58 308.90,200.15 309.10,201.62 309.30,202.97 309.50,204.19 309.70,205.29 309.90,206.23 310.10,207.03 310.30,207.67 310.50,208.16 310.70,208.48 310.90,208.63 311.10,208.62 311.30,208.44 311.50,208.10 311.70,207.60 311.90,206.95 312.10,206.14 312.30,205.19 312.50,204.10 312.70,202.88 312.90,201.55 313.10,200.11 313.30,198.57 313.50,196.94 313.70,195.25 313.90,193.50 314.10,191.70 314.30,189.87 314.50,188.03 314.70,186.18 314.90,184.34 315.10,182.53 315.30,180.76 315.50,179.04 315.70,177.39 315.90,175.81 316.10,174.33 316.30,172.94 316.50,171.67 316.70,170.52 316.90,169.50 317.10,168.61 317.30,167.87 317.50,167.27 317.70,166.83 317.90,166.54 318.10,166.41 318.30,166.44 318.50,166.63 318.70,166.97 318.90,167.46 319.10,168.11 319.30,168.89 319.50,169.81 319.70,170.86 319.90,172.03 320.10,173.31 320.30,174.69 320.50,176.17 320.70,177.72 320.90,179.34 321.10,181.01 321.30,182.72 321.50,184.46 321.70,186.22 321.90,187.98 322.10,189.72 322.30,191.44 322.50,193.12 322.70,194.75 322.90,196.32 323.10,197.81 323.30,199.21 323.50,200.51 323.70,201.71 323.90,202.79 324.10,203.75 324.30,204.58 324.50,205.27 324.70,205.82 324.90,206.23 325.10,206.48 325.30,206.59 325.50,206.54 325.70,206.35 325.90,206.01 326.10,205.52 326.30,204.90 326.50,204.14 326.70,203.25 326.90,202.24 327.10,201.11 327.30,199.88 327.50,198.55 327.70,197.14 327.90,195.66 328.10,194.11 328.30,192.52 328.50,190.88 328.70,189.23 328.90,187.55 329.10,185.88 329.30,184.23 329.50,182.59 329.70,181.00 329.90,179.46 330.10,177.97 330.30,176.57 330.50,175.24 330.70,174.01 330.90,172.88 331.10,171.87 331.30,170.97 331.50,170.19 331.70,169.55 331.90,169.04 332.10,168.68 332.30,168.45 332.50,168.36 332.70,168.42 332.90,168.62 333.10,168.96 333.30,169.44 333.50,170.05 333.70,170.79 333.90,171.65 334.10,172.62 334.30,173.70 334.50,174.89 334.70,176.16 334.90,177.51 335.10,178.92 335.30,180.40 335.50,181.92 335.70,183.48 335.90,185.06 336.10,186.65 336.30,188.24 336.50,189.82 336.70,191.36 336.90,192.88 337.10,194.34 337.30,195.74 337.50,197.07 337.70,198.32 337.90,199.48 338.10,200.54 338.30,201.50 338.50,202.34 338.70,203.06 338.90,203.66 339.10,204.13 339.30,204.46 339.50,204.66 339.70,204.73 339.90,204.66 340.10,204.45 340.30,204.12 340.50,203.65 340.70,203.05 340.90,202.34 341.10,201.51 341.30,200.57 341.50,199.53 341.70,198.39 341.90,197.18 342.10,195.88 342.30,194.53 342.50,193.12 342.70,191.66 342.90,190.18 343.10,188.67 343.30,187.16 343.50,185.65 343.70,184.15 343.90,182.68 344.10,181.25 344.30,179.87 344.50,178.54 344.70,177.28 344.90,176.10 345.10,175.01 345.30,174.01 345.50,173.11 345.70,172.32 345.90,171.65 346.10,171.10 346.30,170.66 346.50,170.36 346.70,170.18 346.90,170.13 347.10,170.22 347.30,170.43 347.50,170.76 347.70,171.22 347.90,171.80 348.10,172.49 348.30,173.29 348.50,174.20 348.70,175.20 348.90,176.29 349.10,177.45 349.30,178.69 349.50,179.99 349.70,181.33 349.90,182.72 350.10,184.14 350.30,185.57 350.50,187.01 350.70,188.45 350.90,189.87 351.10,191.26 351.30,192.62 351.50,193.93 351.70,195.19 351.90,196.38 352.10,197.49 352.30,198.52 352.50,199.46 352.70,200.30 352.90,201.04 353.10,201.67 353.30,202.18 353.50,202.58 353.70,202.86 353.90,203.01 354.10,203.04 354.30,202.95 354.50,202.74 354.70,202.40 354.90,201.95 355.10,201.39 355.30,200.72 355.50,199.95 355.70,199.07 355.90,198.11 356.10,197.07 356.30,195.95 356.50,194.77 356.70,193.53 356.90,192.24 357.10,190.92 357.30,189.57 357.50,188.21 357.70,186.84 357.90,185.47 358.10,184.12 358.30,182.80 358.50,181.51 358.70,180.27 358.90,179.08 359.10,177.96 359.30,176.91 359.50,175.94 359.70,175.05 359.90,174.26 360.10,173.57 360.30,172.99 360.50,172.51 360.70,172.14 360.90,171.89 361.10,171.76 361.30,171.74 361.50,171.84 361.70,172.06 361.90,172.39 362.10,172.83 362.30,173.38 362.50,174.03 362.70,174.77 362.90,175.61 363.10,176.54 363.30,177.54 363.50,178.61 363.70,179.74 363.90,180.92 364.10,182.15 364.30,183.41 364.50,184.70 364.70,186.00 364.90,187.30 365.10,188.60 365.30,189.88 365.50,191.14 365.70,192.36 365.90,193.53 366.10,194.66 366.30,195.72 366.50,196.71 366.70,197.62 366.90,198.46 367.10,199.20 367.30,199.84 367.50,200.39 367.70,200.83 367.90,201.17 368.10,201.39 368.30,201.51 368.50,201.51 368.70,201.40 368.90,201.18 369.10,200.86 369.30,200.43 369.50,199.90 369.70,199.27 369.90,198.55 370.10,197.74 370.30,196.85 370.50,195.89 370.70,194.87 370.90,193.78 371.10,192.65 371.30,191.48 371.50,190.28 371.70,189.05 371.90,187.81 372.10,186.57 372.30,185.34 372.50,184.12 372.70,182.93 372.90,181.78 373.10,180.66 373.30,179.60 373.50,178.60 373.70,177.66 373.90,176.80 374.10,176.02 374.30,175.32 374.50,174.72 374.70,174.21 374.90,173.80 375.10,173.50 375.30,173.29 375.50,173.20 375.70,173.20 375.90,173.32 376.10,173.54 376.30,173.86 376.50,174.28 376.70,174.79 376.90,175.40 377.10,176.10 377.30,176.88 377.50,177.73 377.70,178.65 377.90,179.63 378.10,180.67 378.30,181.75 378.50,182.87 378.70,184.01 378.90,185.18 379.10,186.36 379.30,187.54 379.50,188.71 379.70,189.86 379.90,190.99 380.10,192.09 380.30,193.15 380.50,194.15 380.70,195.10 380.90,195.98 381.10,196.79 381.30,197.53 381.50,198.18 381.70,198.74 381.90,199.21 382.10,199.59 382.30,199.87 382.50,200.06 382.70,200.14 382.90,200.12 383.10,200.00 383.30,199.78 383.50,199.46 383.70,199.05 383.90,198.55 384.10,197.96 384.30,197.29 384.50,196.54 384.70,195.73 384.90,194.84 385.10,193.90 385.30,192.91 385.50,191.88 385.70,190.81 385.90,189.72 386.10,188.60 386.30,187.48 386.50,186.36 386.70,185.25 386.90,184.15 387.10,183.08 387.30,182.04 387.50,181.04 387.70,180.09 387.90,179.20 388.10,178.37 388.30,177.60 388.50,176.91 388.70,176.30 388.90,175.77 389.10,175.33 389.30,174.99 389.50,174.73 389.70,174.57 389.90,174.50 390.10,174.53 390.30,174.65 390.50,174.87 390.70,175.18 390.90,175.58 391.10,176.07 391.30,176.64 391.50,177.29 391.70,178.01 391.90,178.79 392.10,179.64 392.30,180.54 392.50,181.49 392.70,182.47 392.90,183.49 393.10,184.53 393.30,185.59 393.50,186.66 393.70,187.73 393.90,188.78 394.10,189.82 394.30,190.84 394.50,191.83 394.70,192.77 394.90,193.67 395.10,194.51 395.30,195.30 395.50,196.02 395.70,196.67 395.90,197.24 396.10,197.73 396.30,198.14 396.50,198.46 396.70,198.70 396.90,198.84 397.10,198.89 397.30,198.85 397.50,198.73 397.70,198.51 397.90,198.20 398.10,197.81 398.30,197.34 398.50,196.79 398.70,196.17 398.90,195.48 399.10,194.72 399.30,193.91 399.50,193.05 399.70,192.14 399.90,191.20 400.10,190.23 400.30,189.23 400.50,188.22 400.70,187.21 400.90,186.20 401.10,185.19 401.30,184.20 401.50,183.24 401.70,182.31 401.90,181.41 402.10,180.56 402.30,179.77 402.50,179.03 402.70,178.35 402.90,177.74 403.10,177.20 403.30,176.74 403.50,176.36 403.70,176.07 403.90,175.85 404.10,175.73 404.30,175.69 404.50,175.73 404.70,175.86 404.90,176.08 405.10,176.38 405.30,176.76 405.50,177.22 405.70,177.75 405.90,178.35 406.10,179.01 406.30,179.74 406.50,180.52 406.70,181.34 406.90,182.21 407.10,183.11 407.30,184.04 407.50,184.98 407.70,185.94 407.90,186.91 408.10,187.87 408.30,188.83 408.50,189.77 408.70,190.68 408.90,191.56 409.10,192.41 409.30,193.21 409.50,193.96 409.70,194.66 409.90,195.30 410.10,195.87 410.30,196.37 410.50,196.80 410.70,197.15 410.90,197.43 411.10,197.62 411.30,197.73 411.50,197.76 411.70,197.71 411.90,197.57 412.10,197.36 412.30,197.07 412.50,196.70 412.70,196.25 412.90,195.74 413.10,195.16 413.30,194.52 413.50,193.83 413.70,193.08 413.90,192.29 414.10,191.46 414.30,190.60 414.50,189.72 414.70,188.82 414.90,187.90 415.10,186.98 415.30,186.07 415.50,185.16 415.70,184.27 415.90,183.40 416.10,182.57 416.30,181.77 416.50,181.01 416.70,180.30 416.90,179.64 417.10,179.04 417.30,178.50 417.50,178.04 417.70,177.64 417.90,177.31 418.10,177.06 418.30,176.88 418.50,176.78 418.70,176.76 418.90,176.82 419.10,176.96 419.30,177.17 419.50,177.46 419.70,177.82 419.90,178.25 420.10,178.75 420.30,179.30 420.50,179.92 420.70,180.58 420.90,181.30 421.10,182.05 421.30,182.84 421.50,183.66 421.70,184.51 421.90,185.37 422.10,186.24 422.30,187.11 422.50,187.99 422.70,188.85 422.90,189.69 423.10,190.51 423.30,191.31 423.50,192.06 423.70,192.78 423.90,193.45 424.10,194.07 424.30,194.63 424.50,195.13 424.70,195.57 424.90,195.95 425.10,196.25 425.30,196.48 425.50,196.64 425.70,196.73 425.90,196.74 426.10,196.67 426.30,196.53 426.50,196.32 426.70,196.04 426.90,195.69 427.10,195.27 427.30,194.80 427.50,194.26 427.70,193.67 427.90,193.03 428.10,192.35 428.30,191.62 428.50,190.87 428.70,190.08 428.90,189.28 429.10,188.46 429.30,187.63 429.50,186.80 429.70,185.97 429.90,185.15 430.10,184.35 430.30,183.57 430.50,182.82 430.70,182.11 430.90,181.43 431.10,180.80 431.30,180.21 431.50,179.68 431.70,179.21 431.90,178.80 432.10,178.45 432.30,178.17 432.50,177.96 432.70,177.82 432.90,177.74 433.10,177.74 433.30,177.81 433.50,177.95 433.70,178.16 433.90,178.43 434.10,178.78 434.30,179.18 434.50,179.64 434.70,180.15 434.90,180.72 435.10,181.33 435.30,181.99 435.50,182.68 435.70,183.40 435.90,184.15 436.10,184.92 436.30,185.70 436.50,186.49 436.70,187.28 436.90,188.07 437.10,188.84 437.30,189.60 437.50,190.34 437.70,191.05 437.90,191.73 438.10,192.37 438.30,192.97 438.50,193.52 438.70,194.01 438.90,194.46 439.10,194.84 439.30,195.16 439.50,195.43 439.70,195.62 439.90,195.75 440.10,195.81 440.30,195.80 440.50,195.73 440.70,195.59 440.90,195.38 441.10,195.11 441.30,194.78 441.50,194.40 441.70,193.95 441.90,193.45 442.10,192.91 442.30,192.32 442.50,191.69 442.70,191.03 442.90,190.34 443.10,189.63 443.30,188.90 443.50,188.15 443.70,187.40 443.90,186.65 444.10,185.90 444.30,185.16 444.50,184.44 444.70,183.74 444.90,183.07 445.10,182.43 445.30,181.83 445.50,181.26 445.70,180.75 445.90,180.28 446.10,179.86 446.30,179.50 446.50,179.20 446.70,178.96 446.90,178.78 447.10,178.67 447.30,178.62 447.50,178.63 447.70,178.71 447.90,178.85 448.10,179.05 448.30,179.31 448.50,179.63 448.70,180.01 448.90,180.44 449.10,180.92 449.30,181.44 449.50,182.00 449.70,182.60 449.90,183.24 450.10,183.90 450.30,184.58 450.50,185.28 450.70,185.98 450.90,186.70 451.10,187.42 451.30,188.13 451.50,188.83 451.70,189.51 451.90,190.17 452.10,190.81 452.30,191.41 452.50,191.99 452.70,192.52 452.90,193.00 453.10,193.44 453.30,193.83 453.50,194.17 453.70,194.45 453.90,194.67 454.10,194.83 454.30,194.94 454.50,194.98 454.70,194.96 454.90,194.88 455.10,194.74 455.30,194.54 455.50,194.28 455.70,193.97 455.90,193.61 456.10,193.19 456.30,192.73 456.50,192.23 456.70,191.69 456.90,191.12 457.10,190.51 457.30,189.88 457.50,189.23 457.70,188.57 457.90,187.89 458.10,187.21 458.30,186.53 458.50,185.85 458.70,185.19 458.90,184.54 459.10,183.91 459.30,183.31 459.50,182.74 459.70,182.20 459.90,181.70 460.10,181.24 460.30,180.83 460.50,180.46 460.70,180.15 460.90,179.89 461.10,179.68 461.30,179.53 461.50,179.44 461.70,179.41 461.90,179.44 462.10,179.52 462.30,179.66 462.50,179.85 462.70,180.10 462.90,180.41 463.10,180.76 463.30,181.16 463.50,181.60 463.70,182.08 463.90,182.60 464.10,183.15 464.30,183.73 464.50,184.33 464.70,184.95 464.90,185.58 465.10,186.23 465.30,186.87 465.50,187.52 465.70,188.16 465.90,188.79 466.10,189.41 466.30,190.00 466.50,190.57 466.70,191.11 466.90,191.62 467.10,192.09 467.30,192.53 467.50,192.91 467.70,193.26 467.90,193.55 468.10,193.79 468.30,193.98 468.50,194.11 468.70,194.19 468.90,194.22 469.10,194.19 469.30,194.10 469.50,193.97 469.70,193.77 469.90,193.53 470.10,193.24 470.30,192.90 470.50,192.51 470.70,192.09 470.90,191.63 471.10,191.13 471.30,190.60 471.50,190.05 471.70,189.48 471.90,188.88 472.10,188.28 472.30,187.67 472.50,187.05 472.70,186.44 472.90,185.83 473.10,185.23 473.30,184.64 473.50,184.08 473.70,183.54 473.90,183.03 474.10,182.55 474.30,182.11 474.50,181.70 474.70,181.34 474.90,181.02 475.10,180.74 475.30,180.52 475.50,180.34 475.70,180.22 475.90,180.15 476.10,180.13 476.30,180.17 476.50,180.25 476.70,180.39 476.90,180.58 477.10,180.82 477.30,181.10 477.50,181.43 477.70,181.80 477.90,182.21 478.10,182.65 478.30,183.13 478.50,183.63 478.70,184.16 478.90,184.71 479.10,185.27 479.30,185.85 479.50,186.43 479.70,187.02 479.90,187.60 480.10,188.18 480.30,188.75 480.50,189.30 480.70,189.84 480.90,190.35 481.10,190.83 481.30,191.28 481.50,191.70 481.70,192.08 481.90,192.43 482.10,192.72 482.30,192.98 482.50,193.19 482.70,193.35 482.90,193.46 483.10,193.52 483.30,193.53 483.50,193.49 483.70,193.41 483.90,193.27 484.10,193.08 484.30,192.85 484.50,192.58 484.70,192.26 484.90,191.91 485.10,191.52 485.30,191.09 485.50,190.63 485.70,190.15 485.90,189.65 486.10,189.12 486.30,188.58 486.50,188.03 486.70,187.48 486.90,186.92 487.10,186.36 487.30,185.81 487.50,185.28 487.70,184.75 487.90,184.25 488.10,183.76 488.30,183.31 488.50,182.88 488.70,182.48 488.90,182.13 489.10,181.80 489.30,181.52 489.50,181.29 489.70,181.09 489.90,180.95 490.10,180.85 490.30,180.79 490.50,180.79 490.70,180.83 490.90,180.92 491.10,181.05 491.30,181.23 491.50,181.46 491.70,181.72 491.90,182.03 492.10,182.37 492.30,182.75 492.50,183.16 492.70,183.59 492.90,184.06 493.10,184.54 493.30,185.04 493.50,185.55 493.70,186.08 493.90,186.61 494.10,187.14 494.30,187.66 494.50,188.19 494.70,188.70 494.90,189.19 495.10,189.67 495.30,190.13 495.50,190.56 495.70,190.96 495.90,191.34 496.10,191.67 496.30,191.97 496.50,192.24 496.70,192.46 496.90,192.64 497.10,192.77 497.30,192.86 497.50,192.91 497.70,192.91 497.90,192.86 498.10,192.77 498.30,192.64 498.50,192.46 498.70,192.25 498.90,191.99 499.10,191.69 499.30,191.36 499.50,191.00 499.70,190.61 499.90,190.19 500.10,189.75 500.30,189.29 500.50,188.81 500.70,188.32 500.90,187.82 501.10,187.32 501.30,186.81 501.50,186.31 501.70,185.82 501.90,185.33 502.10,184.86 502.30,184.41 502.50,183.98 502.70,183.57 502.90,183.19 503.10,182.84 503.30,182.52 503.50,182.24 503.70,181.99 503.90,181.79 504.10,181.62 504.30,181.50 504.50,181.42 504.70,181.38 504.90,181.38 505.10,181.43 505.30,181.52 505.50,181.65 505.70,181.82 505.90,182.04 506.10,182.28 506.30,182.57 506.50,182.89 506.70,183.23 506.90,183.61 507.10,184.01 507.30,184.43 507.50,184.87 507.70,185.33 507.90,185.80 508.10,186.27 508.30,186.75 508.50,187.23 508.70,187.71 508.90,188.18 509.10,188.64 509.30,189.08 509.50,189.51 509.70,189.92 509.90,190.31 510.10,190.67 510.30,191.00 510.50,191.29 510.70,191.56 510.90,191.79 511.10,191.98 511.30,192.13 511.50,192.24 511.70,192.32 511.90,192.35 512.10,192.34 512.30,192.29 512.50,192.20 512.70,192.07 512.90,191.90 513.10,191.70 513.30,191.46 513.50,191.18 513.70,190.88 513.90,190.54 514.10,190.18 514.30,189.80 514.50,189.40 514.70,188.98 514.90,188.54 515.10,188.09 515.30,187.64 515.50,187.19 515.70,186.73 515.90,186.28 516.10,185.83 516.30,185.39 516.50,184.97 516.70,184.56 516.90,184.18 517.10,183.81 517.30,183.48 517.50,183.17 517.70,182.89 517.90,182.64 518.10,182.42 518.30,182.25 518.50,182.10 518.70,182.00 518.90,181.94 519.10,181.91 519.30,181.92 519.50,181.97 519.70,182.06 519.90,182.19 520.10,182.36 520.30,182.55 520.50,182.79 520.70,183.05 520.90,183.34 521.10,183.67 521.30,184.01 521.50,184.38 521.70,184.76 521.90,185.17 522.10,185.58 522.30,186.01 522.50,186.44 522.70,186.87 522.90,187.31 523.10,187.74 523.30,188.16 523.50,188.57 523.70,188.98 523.90,189.36 524.10,189.72 524.30,190.07 524.50,190.39 524.70,190.68 524.90,190.94 525.10,191.17 525.30,191.37 525.50,191.54 525.70,191.67 525.90,191.76 526.10,191.82 526.30,191.84 526.50,191.83 526.70,191.77 526.90,191.68 527.10,191.56 527.30,191.40 527.50,191.21 527.70,190.98 527.90,190.73 528.10,190.44 528.30,190.14 528.50,189.81 528.70,189.45 528.90,189.08 529.10,188.70 529.30,188.30 529.50,187.90 529.70,187.49 529.90,187.07 530.10,186.66 530.30,186.25 530.50,185.85 530.70,185.46 530.90,185.08 531.10,184.72 531.30,184.37 531.50,184.05 531.70,183.75 531.90,183.47 532.10,183.22 532.30,183.01 532.50,182.82 532.70,182.67 532.90,182.55 533.10,182.46 533.30,182.41 533.50,182.39 533.70,182.41 533.90,182.47 534.10,182.56 534.30,182.68 534.50,182.83 534.70,183.02 534.90,183.24 535.10,183.48 535.30,183.76 535.50,184.05 535.70,184.37 535.90,184.70 536.10,185.06 536.30,185.42 536.50,185.80 536.70,186.19 536.90,186.58 537.10,186.97 537.30,187.37 537.50,187.75 537.70,188.14 537.90,188.51 538.10,188.87 538.30,189.21 538.50,189.54 538.70,189.84 538.90,190.13 539.10,190.39 539.30,190.62 539.50,190.82 539.70,191.00 539.90,191.14 540.10,191.25 540.30,191.33 540.50,191.37 540.70,191.38 540.90,191.36 541.10,191.30 541.30,191.22 541.50,191.10 541.70,190.94 541.90,190.76 542.10,190.55 542.30,190.32 542.50,190.06 542.70,189.77 542.90,189.47 543.10,189.15 543.30,188.81 543.50,188.46 543.70,188.10 543.90,187.73 544.10,187.36 544.30,186.98 544.50,186.61 544.70,186.24 544.90,185.88 545.10,185.53 545.30,185.19 545.50,184.86 545.70,184.55 545.90,184.26 546.10,184.00 546.30,183.75 546.50,183.54 546.70,183.34 546.90,183.18 547.10,183.05 547.30,182.95 547.50,182.88 547.70,182.84 547.90,182.83 548.10,182.86 548.30,182.91 548.50,183.00 548.70,183.12 548.90,183.27 549.10,183.44 549.30,183.64 549.50,183.87 549.70,184.12 549.90,184.39 550.10,184.69 550.30,184.99 550.50,185.32 550.70,185.65 550.90,185.99 551.10,186.34 551.30,186.70 551.50,187.06 551.70,187.41 551.90,187.76 552.10,188.10 552.30,188.44 552.50,188.76 552.70,189.07 552.90,189.36 553.10,189.63 553.30,189.88 553.50,190.11 553.70,190.32 553.90,190.50 554.10,190.65 554.30,190.77 554.50,190.86 554.70,190.93 554.90,190.96 555.10,190.96 555.30,190.94 555.50,190.88 555.70,190.79 555.90,190.68 556.10,190.53 556.30,190.36 556.50,190.17 556.70,189.95 556.90,189.71 557.10,189.45 557.30,189.17 557.50,188.88 557.70,188.57 557.90,188.25 558.10,187.92 558.30,187.59 558.50,187.25 558.70,186.91 558.90,186.57 559.10,186.24 559.30,185.91 559.50,185.60 559.70,185.29 559.90,185.00 560.10,184.72 560.30,184.47 560.50,184.23 560.70,184.02 560.90,183.82 561.10,183.66 561.30,183.52 561.50,183.40 561.70,183.32 561.90,183.26 562.10,183.23 562.30,183.23 562.50,183.26 562.70,183.32 562.90,183.40 563.10,183.52 563.30,183.65 563.50,183.82 563.70,184.01 563.90,184.22 564.10,184.45 564.30,184.70 564.50,184.97 564.70,185.25 564.90,185.54 565.10,185.85 565.30,186.16 565.50,186.48 565.70,186.80 565.90,187.12 566.10,187.44 566.30,187.76 566.50,188.07 566.70,188.37 566.90,188.66 567.10,188.93 567.30,189.19 567.50,189.44 567.70,189.66 567.90,189.86 568.10,190.04 568.30,190.20 568.50,190.33 568.70,190.43 568.90,190.51 569.10,190.56 569.30,190.59 569.50,190.58 569.70,190.55 569.90,190.50 570.10,190.41 570.30,190.30 570.50,190.17 570.70,190.01 570.90,189.83 571.10,189.62 571.30,189.40 571.50,189.16 571.70,188.91 571.90,188.64 572.10,188.35 572.30,188.06 572.50,187.76 572.70,187.46 572.90,187.16 573.10,186.85 573.30,186.54 573.50,186.24 573.70,185.95 573.90,185.67 574.10,185.39 574.30,185.13 574.50,184.89 574.70,184.66 574.90,184.45 575.10,184.26 575.30,184.09 575.50,183.94 575.70,183.82 575.90,183.72 576.10,183.65 576.30,183.61 576.50,183.59 576.70,183.59 576.90,183.62 577.10,183.68 577.30,183.76 577.50,183.87 577.70,184.00 577.90,184.16 578.10,184.33 578.30,184.53 578.50,184.74 578.70,184.97 578.90,185.22 579.10,185.47 579.30,185.74 579.50,186.02 579.70,186.30 579.90,186.59 580.10,186.89 580.30,187.18 580.50,187.47 580.70,187.75 580.90,188.03 581.10,188.30 581.30,188.56 581.50,188.80 581.70,189.04 581.90,189.25 582.10,189.45 582.30,189.63 582.50,189.79 582.70,189.92 582.90,190.04 583.10,190.13 583.30,190.19 583.50,190.23 583.70,190.25 583.90,190.24 584.10,190.21 584.30,190.15 584.50,190.07 584.70,189.96 584.90,189.84 585.10,189.69 585.30,189.52 585.50,189.33 585.70,189.13 585.90,188.90 586.10,188.67 586.30,188.42 586.50,188.17 586.70,187.90 586.90,187.63 587.10,187.36 587.30,187.08 587.50,186.80 587.70,186.53 587.90,186.26 588.10,185.99 588.30,185.74 588.50,185.49 588.70,185.26 588.90,185.04 589.10,184.84 589.30,184.65 589.50,184.48 589.70,184.33 589.90,184.21 590.10,184.10 590.30,184.02 590.50,183.96 590.70,183.92 590.90,183.91 591.10,183.92 591.30,183.95 591.50,184.01 591.70,184.09 591.90,184.19 592.10,184.32 592.30,184.46 592.50,184.62 592.70,184.80 592.90,185.00 593.10,185.21 593.30,185.44 593.50,185.67 593.70,185.92 593.90,186.17 594.10,186.43 594.30,186.69 594.50,186.96 594.70,187.22 594.90,187.48 595.10,187.74 595.30,187.99 595.50,188.23 595.70,188.46 595.90,188.68 596.10,188.89 596.30,189.08 596.50,189.25 596.70,189.41 596.90,189.55 597.10,189.67 597.30,189.77 597.50,189.84 597.70,189.90 597.90,189.93 598.10,189.94 598.30,189.93 598.50,189.89 598.70,189.83 598.90,189.76 599.10,189.66 599.30,189.54 599.50,189.40 599.70,189.24 599.90,189.07 600.10,188.88 600.30,188.68 600.50,188.46 600.70,188.24 600.90,188.00 601.10,187.76 601.30,187.51 601.50,187.27 601.70,187.01 601.90,186.76 602.10,186.52 602.30,186.27 602.50,186.03 602.70,185.81 602.90,185.59 603.10,185.38 603.30,185.18 603.50,185.00 603.70,184.84 603.90,184.69 604.10,184.56 604.30,184.45 604.50,184.36 604.70,184.29 604.90,184.24 605.10,184.21 605.30,184.20 605.50,184.22 605.70,184.25 605.90,184.31 606.10,184.39 606.30,184.48 606.50,184.60 606.70,184.73 606.90,184.89 607.10,185.05 607.30,185.23 607.50,185.43 607.70,185.63 607.90,185.85 608.10,186.07 608.30,186.30 608.50,186.54 608.70,186.77 608.90,187.01 609.10,187.25 609.30,187.49 609.50,187.72 609.70,187.94 609.90,188.16 610.10,188.37 610.30,188.56 610.50,188.75 610.70,188.92 610.90,189.07 611.10,189.21 611.30,189.33 611.50,189.44 611.70,189.52 611.90,189.59 612.10,189.63 612.30,189.66 612.50,189.66 612.70,189.64 612.90,189.61 613.10,189.55 613.30,189.48 613.50,189.38 613.70,189.27 613.90,189.14 614.10,188.99 614.30,188.83 614.50,188.66 614.70,188.47 614.90,188.28 615.10,188.07 615.30,187.86 615.50,187.64 615.70,187.42 615.90,187.19 616.10,186.96 616.30,186.74 616.50,186.51 616.70,186.29 616.90,186.08 617.10,185.87 617.30,185.68 617.50,185.49 617.70,185.32 617.90,185.16 618.10,185.01 618.30,184.88 618.50,184.77 618.70,184.67 618.90,184.59 619.10,184.53 619.30,184.49 619.50,184.47 619.70,184.47 619.90,184.49 620.10,184.52 620.30,184.58 620.50,184.65 620.70,184.75 620.90,184.85 621.10,184.98 621.30,185.12 621.50,185.27 621.70,185.44 621.90,185.62 622.10,185.81 622.30,186.00 622.50,186.21 622.70,186.42 622.90,186.63 623.10,186.84 623.30,187.06 623.50,187.28 623.70,187.49 623.90,187.70 624.10,187.90 624.30,188.09 624.50,188.28 624.70,188.45 624.90,188.62 625.10,188.77 625.30,188.91 625.50,189.03 625.70,189.13 625.90,189.22 626.10,189.30 626.30,189.35 626.50,189.39 626.70,189.41 626.90,189.41 627.10,189.39 627.30,189.35 627.50,189.30 627.70,189.22 627.90,189.13 628.10,189.03 628.30,188.91 628.50,188.77 628.70,188.63 628.90,188.47 629.10,188.30 629.30,188.12 629.50,187.93 629.70,187.73 629.90,187.53 630.10,187.33 630.30,187.12 630.50,186.92 630.70,186.71 630.90,186.51 631.10,186.32 631.30,186.12 631.50,185.94 631.70,185.76 631.90,185.60 632.10,185.44 632.30,185.30 632.50,185.17 632.70,185.06 632.90,184.96 633.10,184.88 633.30,184.81 633.50,184.76 633.70,184.73 633.90,184.71 634.10,184.71 634.30,184.73 634.50,184.77 634.70,184.82 634.90,184.89 635.10,184.98 635.30,185.08 635.50,185.20 635.70,185.33 635.90,185.47 636.10,185.62 636.30,185.79 636.50,185.96 636.70,186.14 636.90,186.32 637.10,186.51 637.30,186.71 637.50,186.90 637.70,187.10 637.90,187.29 638.10,187.48 638.30,187.67 638.50,187.85 638.70,188.03 638.90,188.19 639.10,188.35 639.30,188.50 639.50,188.63 639.70,188.75 639.90,188.86 640.10,188.95 640.30,189.03 640.50,189.09 640.70,189.14 640.90,189.17 641.10,189.18 641.30,189.17 641.50,189.15 641.70,189.12 641.90,189.06 642.10,188.99 642.30,188.91 642.50,188.81 642.70,188.70 642.90,188.58 643.10,188.44 643.30,188.29 643.50,188.14 643.70,187.97 643.90,187.80 644.10,187.62 644.30,187.44 644.50,187.26 644.70,187.07 644.90,186.89 645.10,186.70 645.30,186.52 645.50,186.34 645.70,186.17 645.90,186.00 646.10,185.85 646.30,185.70 646.50,185.56 646.70,185.44 646.90,185.32 647.10,185.22 647.30,185.13 647.50,185.06 647.70,185.01 647.90,184.96 648.10,184.94 648.30,184.93 648.50,184.93 648.70,184.95 648.90,184.99 649.10,185.04 649.30,185.11 649.50,185.19 649.70,185.29 649.90,185.39 650.10,185.51 650.30,185.65 650.50,185.79 650.70,185.94 650.90,186.09 651.10,186.26 651.30,186.43 651.50,186.60 651.70,186.78 651.90,186.95 652.10,187.13 652.30,187.30 652.50,187.48 652.70,187.65 652.90,187.81 653.10,187.96 653.30,188.11 653.50,188.25 653.70,188.38 653.90,188.50 654.10,188.61 654.30,188.70 654.50,188.78 654.70,188.85 654.90,188.90 655.10,188.94 655.30,188.96 655.50,188.97 655.70,188.97 655.90,188.94 656.10,188.91 656.30,188.85 656.50,188.79 656.70,188.71 656.90,188.62 657.10,188.51 657.30,188.40 657.50,188.27 657.70,188.14 657.90,188.00 658.10,187.85 658.30,187.69 658.50,187.53 658.70,187.36 658.90,187.19 659.10,187.03 659.30,186.86 659.50,186.69 659.70,186.53 659.90,186.37 660.10,186.21 660.30,186.07 660.50,185.93 660.70,185.79 660.90,185.67 661.10,185.56 661.30,185.46 661.50,185.37 661.70,185.30 661.90,185.23 662.10,185.18 662.30,185.15 662.50,185.13 662.70,185.12 662.90,185.13 663.10,185.15 663.30,185.19 663.50,185.24 663.70,185.31 663.90,185.38 664.10,185.47 664.30,185.57 664.50,185.68 664.70,185.80 664.90,185.93 665.10,186.07 665.30,186.21 665.50,186.36 665.70,186.52 665.90,186.67 666.10,186.83 666.30,186.99 666.50,187.15 666.70,187.31 666.90,187.47 667.10,187.62 667.30,187.76 667.50,187.90 667.70,188.04 667.90,188.16 668.10,188.28 668.30,188.38 668.50,188.48 668.70,188.56 668.90,188.63 669.10,188.69 669.30,188.73 669.50,188.76 669.70,188.78 669.90,188.78 670.10,188.78 670.30,188.75 670.50,188.72 670.70,188.67 670.90,188.60 671.10,188.53 671.30,188.44 671.50,188.35 671.70,188.24 671.90,188.13 672.10,188.00 672.30,187.87 672.50,187.73 672.70,187.59 672.90,187.44 673.10,187.29 673.30,187.14 673.50,186.99 673.70,186.84 673.90,186.69 674.10,186.54 674.30,186.40 674.50,186.26 674.70,186.13 674.90,186.00 675.10,185.88 675.30,185.77 675.50,185.68 675.70,185.59 675.90,185.51 676.10,185.44 676.30,185.39 676.50,185.35 676.70,185.32 676.90,185.31 677.10,185.30 677.30,185.31 677.50,185.34 677.70,185.37 677.90,185.42 678.10,185.48 678.30,185.55 678.50,185.64 678.70,185.73 678.90,185.83 679.10,185.94 679.30,186.06 679.50,186.19 679.70,186.32 679.90,186.45 680.10,186.59 680.30,186.74 680.50,186.88 680.70,187.03 680.90,187.17 681.10,187.31 681.30,187.45 681.50,187.59 681.70,187.72 681.90,187.85 682.10,187.96 682.30,188.07 682.50,188.18 682.70,188.27 682.90,188.35 683.10,188.43 683.30,188.49 683.50,188.54 683.70,188.57 683.90,188.60 684.10,188.61 684.30,188.61 684.50,188.60 684.70,188.58 684.90,188.54 685.10,188.50 685.30,188.44 685.50,188.37 685.70,188.29 685.90,188.20 686.10,188.10 686.30,187.99 686.50,187.88 686.70,187.76 686.90,187.63 687.10,187.50 687.30,187.37 687.50,187.23 687.70,187.10 687.90,186.96 688.10,186.82 688.30,186.69 688.50,186.55 688.70,186.43 688.90,186.30 689.10,186.18 689.30,186.07 689.50,185.97 689.70,185.87 689.90,185.78 690.10,185.70 690.30,185.64 690.50,185.58 690.70,185.53 690.90,185.50 691.10,185.48 691.30,185.46 691.50,185.46 691.70,185.48 691.90,185.50 692.10,185.54 692.30,185.58 692.50,185.64 692.70,185.71 692.90,185.78 693.10,185.87 693.30,185.96 693.50,186.07 693.70,186.17 693.90,186.29 694.10,186.41 694.30,186.53 694.50,186.66 694.70,186.79 694.90,186.92 695.10,187.05 695.30,187.18 695.50,187.31 695.70,187.44 695.90,187.56 696.10,187.68 696.30,187.79 696.50,187.90 696.70,187.99 696.90,188.08 697.10,188.17 697.30,188.24 697.50,188.30 697.70,188.36 697.90,188.40 698.10,188.43 698.30,188.45 698.50,188.46 698.70,188.46 698.90,188.45 699.10,188.42 699.30,188.39 699.50,188.34 699.70,188.29 699.90,188.22 700.10,188.15 700.30,188.07 700.50,187.98 700.70,187.88 700.90,187.77 701.10,187.66 701.30,187.55 701.50,187.43 701.70,187.31 701.90,187.18 702.10,187.06 702.30,186.94 702.50,186.81 702.70,186.69 702.90,186.57 703.10,186.45 703.30,186.34 703.50,186.24 703.70,186.14 703.90,186.04 704.10,185.96 704.30,185.88 704.50,185.81 704.70,185.75 704.90,185.70 705.10,185.67 705.30,185.64 705.50,185.62 705.70,185.61 705.90,185.61 706.10,185.63 706.30,185.65 706.50,185.68 706.70,185.73 706.90,185.78 707.10,185.84 707.30,185.92 707.50,186.00 707.70,186.08 707.90,186.18 708.10,186.28 708.30,186.38 708.50,186.49 708.70,186.60 708.90,186.72 709.10,186.84 709.30,186.96 709.50,187.07 709.70,187.19 709.90,187.31 710.10,187.42 710.30,187.53 710.50,187.64 710.70,187.74 710.90,187.83 711.10,187.92 711.30,188.00 711.50,188.07 711.70,188.14 711.90,188.19 712.10,188.24 712.30,188.27 712.50,188.30 712.70,188.32 712.90,188.32 713.10,188.32 713.30,188.31 713.50,188.28 713.70,188.25 713.90,188.21 714.10,188.15 714.30,188.09 714.50,188.02 714.70,187.95 714.90,187.86 715.10,187.77 715.30,187.68 715.50,187.58 715.70,187.47 715.90,187.36 716.10,187.25 716.30,187.14 716.50,187.03 716.70,186.92 716.90,186.80 717.10,186.69 717.30,186.59 717.50,186.48 717.70,186.38 717.90,186.29 718.10,186.20 718.30,186.12 718.50,186.04 718.70,185.97 718.90,185.91 719.10,185.86 719.30,185.82 719.50,185.79 719.70,185.76 719.90,185.75 720.10,185.74 720.30,185.75 720.50,185.76 720.70,185.78 720.90,185.82 721.10,185.86 721.30,185.91 721.50,185.97 721.70,186.03 721.90,186.11 722.10,186.19 722.30,186.27 722.50,186.37 722.70,186.46 722.90,186.56 723.10,186.66 723.30,186.77 723.50,186.88 723.70,186.98 723.90,187.09 724.10,187.20 724.30,187.30 724.50,187.40 724.70,187.50 724.90,187.60 725.10,187.69 725.30,187.77 725.50,187.85 725.70,187.92 725.90,187.98 726.10,188.04 726.30,188.09 726.50,188.13 726.70,188.16 726.90,188.18 727.10,188.19 727.30,188.20 727.50,188.19 727.70,188.18 727.90,188.15 728.10,188.12 728.30,188.08 728.50,188.03 728.70,187.98 728.90,187.91 729.10,187.84 729.30,187.76 729.50,187.68 729.70,187.59 729.90,187.50 730.10,187.41 730.30,187.31 730.50,187.21 730.70,187.11 730.90,187.00 731.10,186.90 731.30,186.80 731.50,186.70 731.70,186.60 731.90,186.51 732.10,186.42 732.30,186.34 732.50,186.26 732.70,186.18 732.90,186.12 733.10,186.06 733.30,186.01 733.50,185.96 733.70,185.92 733.90,185.89 734.10,185.88 734.30,185.86 734.50,185.86 734.70,185.87 734.90,185.88 735.10,185.91 735.30,185.94 735.50,185.98 735.70,186.02 735.90,186.08 736.10,186.14 736.30,186.21 736.50,186.28 736.70,186.36 736.90,186.45 737.10,186.53 737.30,186.62 737.50,186.72 737.70,186.81 737.90,186.91 738.10,187.01 738.30,187.10 738.50,187.20 738.70,187.29 738.90,187.39 739.10,187.47 739.30,187.56 739.50,187.64 739.70,187.71 739.90,187.78 740.10,187.85 740.30,187.90 740.50,187.95 740.70,187.99 740.90,188.03 741.10,188.05 741.30,188.07 741.50,188.08 741.70,188.08 741.90,188.08 742.10,188.06 742.30,188.04 742.50,188.01 742.70,187.97 742.90,187.92 743.10,187.87 743.30,187.81 743.50,187.75 743.70,187.67 743.90,187.60 744.10,187.52 744.30,187.43 744.50,187.35 744.70,187.26 744.90,187.17 745.10,187.07 745.30,186.98 745.50,186.89"/><polyline fill="none" stroke="#c4a000" stroke-width="0.8" points="40.50,44.39 42.50,46.35 44.50,48.29 46.50,50.20 48.50,52.08 50.50,53.93 52.50,55.76 54.50,57.57 56.50,59.34 58.50,61.10 60.50,62.83 62.50,64.54 64.50,66.22 66.50,67.88 68.50,69.52 70.50,71.13 72.50,72.72 74.50,74.29 76.50,75.84 78.50,77.37 80.50,78.87 82.50,80.36 84.50,81.82 86.50,83.27 88.50,84.69 90.50,86.10 92.50,87.48 94.50,88.85 96.50,90.20 98.50,91.52 100.50,92.83 102.50,94.13 104.50,95.40 106.50,96.66 108.50,97.90 110.50,99.12 112.50,100.33 114.50,101.51 116.50,102.69 118.50,103.84 120.50,104.98 122.50,106.11 124.50,107.22 126.50,108.31 128.50,109.39 130.50,110.45 132.50,111.50 134.50,112.54 136.50,113.56 138.50,114.56 140.50,115.55 142.50,116.53 144.50,117.50 146.50,118.45 148.50,119.39 150.50,120.31 152.50,121.23 154.50,122.13 156.50,123.01 158.50,123.89 160.50,124.75 162.50,125.60 164.50,126.44 166.50,127.27 168.50,128.09 170.50,128.89 172.50,129.69 174.50,130.47 176.50,131.24 178.50,132.01 180.50,132.76 182.50,133.50 184.50,134.23 186.50,134.95 188.50,135.66 190.50,136.36 192.50,137.05 194.50,137.73 196.50,138.40 198.50,139.07 200.50,139.72 202.50,140.37 204.50,141.00 206.50,141.63 208.50,142.25 210.50,142.86 212.50,143.46 214.50,144.05 216.50,144.64 218.50,145.21 220.50,145.78 222.50,146.34 224.50,146.90 226.50,147.44 228.50,147.98 230.50,148.51 232.50,149.03 234.50,149.55 236.50,150.06 238.50,150.56 240.50,151.06 242.50,151.54 244.50,152.03 246.50,152.50 248.50,152.97 250.50,153.43 252.50,153.89 254.50,154.33 256.50,154.78 258.50,155.21 260.50,155.64 262.50,156.07 264.50,156.49 266.50,156.90 268.50,157.31 270.50,157.71 272.50,158.11 274.50,158.50 276.50,158.88 278.50,159.26 280.50,159.64 282.50,160.01 284.50,160.37 286.50,160.73 288.50,161.09 290.50,161.44 292.50,161.78 294.50,162.12 296.50,162.46 298.50,162.79 300.50,163.11 302.50,163.43 304.50,163.75 306.50,164.06 308.50,164.37 310.50,164.68 312.50,164.98 314.50,165.27 316.50,165.56 318.50,165.85 320.50,166.14 322.50,166.42 324.50,166.69 326.50,166.96 328.50,167.23 330.50,167.50 332.50,167.76 334.50,168.02 336.50,168.27 338.50,168.52 340.50,168.77 342.50,169.01 344.50,169.25 346.50,169.49 348.50,169.72 350.50,169.95 352.50,170.18 354.50,170.40 356.50,170.62 358.50,170.84 360.50,171.06 362.50,171.27 364.50,171.48 366.50,171.68 368.50,171.89 370.50,172.09 372.50,172.28 374.50,172.48 376.50,172.67 378.50,172.86 380.50,173.05 382.50,173.23 384.50,173.41 386.50,173.59 388.50,173.77 390.50,173.95 392.50,174.12 394.50,174.29 396.50,174.45 398.50,174.62 400.50,174.78 402.50,174.94 404.50,175.10 406.50,175.26 408.50,175.41 410.50,175.56 412.50,175.71 414.50,175.86 416.50,176.01 418.50,176.15 420.50,176.29 422.50,176.43 424.50,176.57 426.50,176.70 428.50,176.84 430.50,176.97 432.50,177.10 434.50,177.23 436.50,177.35 438.50,177.48 440.50,177.60 442.50,177.72 444.50,177.84 446.50,177.96 448.50,178.08 450.50,178.19 452.50,178.31 454.50,178.42 456.50,178.53 458.50,178.64 460.50,178.75 462.50,178.85 464.50,178.96 466.50,179.06 468.50,179.16 470.50,179.26 472.50,179.36 474.50,179.46 476.50,179.55 478.50,179.65 480.50,179.74 482.50,179.83 484.50,179.92 486.50,180.01 488.50,180.10 490.50,180.19 492.50,180.27 494.50,180.36 496.50,180.44 498.50,180.52 500.50,180.60 502.50,180.68 504.50,180.76 506.50,180.84 508.50,180.92 510.50,180.99 512.50,181.07 514.50,181.14 516.50,181.21 518.50,181.29 520.50,181.36 522.50,181.43 524.50,181.49 526.50,181.56 528.50,181.63 530.50,181.70 532.50,181.76 534.50,181.82 536.50,181.89 538.50,181.95 540.50,182.01 542.50,182.07 544.50,182.13 546.50,182.19 548.50,182.25 550.50,182.31 552.50,182.36 554.50,182.42 556.50,182.47 558.50,182.53 560.50,182.58 562.50,182.63 564.50,182.69 566.50,182.74 568.50,182.79 570.50,182.84 572.50,182.89 574.50,182.94 576.50,182.98 578.50,183.03 580.50,183.08 582.50,183.12 584.50,183.17 586.50,183.21 588.50,183.26 590.50,183.30 592.50,183.34 594.50,183.39 596.50,183.43 598.50,183.47 600.50,183.51 602.50,183.55 604.50,183.59 606.50,183.63 608.50,183.66 610.50,183.70 612.50,183.74 614.50,183.78 616.50,183.81 618.50,183.85 620.50,183.88 622.50,183.92 624.50,183.95 626.50,183.99 628.50,184.02 630.50,184.05 632.50,184.09 634.50,184.12 636.50,184.15 638.50,184.18 640.50,184.21 642.50,184.24 644.50,184.27 646.50,184.30 648.50,184.33 650.50,184.36 652.50,184.39 654.50,184.41 656.50,184.44 658.50,184.47 660.50,184.49 662.50,184.52 664.50,184.55 666.50,184.57 668.50,184.60 670.50,184.62 672.50,184.65 674.50,184.67 676.50,184.70 678.50,184.72 680.50,184.74 682.50,184.77 684.50,184.79 686.50,184.81 688.50,184.83 690.50,184.85 692.50,184.87 694.50,184.90 696.50,184.92 698.50,184.94 700.50,184.96 702.50,184.98 704.50,185.00 706.50,185.02 708.50,185.04 710.50,185.05 712.50,185.07 714.50,185.09 716.50,185.11 718.50,185.13 720.50,185.14 722.50,185.16 724.50,185.18 726.50,185.20 728.50,185.21 730.50,185.23 732.50,185.25 734.50,185.26 736.50,185.28 738.50,185.29 740.50,185.31 742.50,185.32 744.50,185.34"/><line x1="73.6" y1="35" x2="73.6" y2="64" stroke="#6a6ab8" stroke-width="0.7" stroke-dasharray="1 1"/><line x1="159.5" y1="35" x2="159.5" y2="64" stroke="#6a6ab8" stroke-width="0.7" stroke-dasharray="1 1"/><line x1="76" y1="49.6" x2="157" y2="49.6" stroke="#8080d0" stroke-width="0.8"/><path d="M73 49.6 L77.5 47.6 L77.5 51.6 Z" fill="#8080d0"/><path d="M160 49.6 L155.5 47.6 L155.5 51.6 Z" fill="#8080d0"/><rect x="88.8" y="39.2" width="23" height="5.2" fill="#383838"/><text x="89.5" y="43.3" font-family="Liberation Sans" font-size="4.5" fill="#e8e8e8">time(1)(F2)</text><rect x="21.4" y="181.9" width="6.2" height="3.8" fill="#f0b000"/><circle cx="24" cy="15.5" r="1.2" fill="#e05080"/><path d="M746 187 L749.5 184.8 L749.5 189.2 Z" fill="#c8b010"/><path d="M385.2 362.3 L388.6 362.3 L386.9 358.6 Z" fill="#f0e000"/></svg><div id="menu"><div class="mi" style="left:10px">File</div><div class="mi" style="left:33px">Vertical</div><div class="mi" style="left:65px">Timebase</div><div class="mi" style="left:101.3px">Trigger</div><div class="mi" style="left:131.6px">Display</div><div class="mi" style="left:162.7px">Cursors</div><div class="mi" style="left:195.7px">Measure</div><div class="mi" style="left:229.3px">Math</div><div class="mi" style="left:256px">Analysis</div><div class="mi" style="left:290.7px">Utilities</div><div class="mi" style="left:322px">Support</div><div class="sep" style="left:23.3px"></div><div class="sep" style="left:91.5px"></div><div class="sep" style="left:121.3px"></div><div class="sep" style="left:153.7px"></div><div class="sep" style="left:185.5px"></div><div class="sep" style="left:220.3px"></div><div class="sep" style="left:246.3px"></div><div class="sep" style="left:280.4px"></div><div class="sep" style="left:312.4px"></div><div class="sep" style="left:344px"></div><svg width="350" height="14" style="position:absolute;left:0;top:0"><path d="M3.2 4 L5.6 4 L6.4 4.8 L6.4 9.4 L2.8 9.4 L2.8 4.4 Z" fill="none" stroke="#bbb" stroke-width="0.9"/><rect x="3.8" y="6.6" width="1.8" height="1.8" fill="#bbb"/><rect x="28.1" y="4.2" width="1.1" height="5.4" fill="#fff"/><rect x="27.5" y="3.8" width="2.3" height="0.9" fill="#fff"/><rect x="27.5" y="9.2" width="2.3" height="0.9" fill="#fff"/><path d="M58 6.8 L62.6 6.8" stroke="#fff" stroke-width="0.9"/><path d="M57.3 6.8 L59.3 5.2 L59.3 8.4 Z M63.3 6.8 L61.3 5.2 L61.3 8.4 Z" fill="#fff"/><path d="M97 9.6 L97 4.6" stroke="#ddd" stroke-width="0.9"/><path d="M97 4 L98.4 5.4 L97 5.4 Z" fill="#ddd"/><rect x="124.2" y="4.6" width="5.6" height="4" rx="1" fill="none" stroke="#ccc" stroke-width="0.9"/><rect x="125.6" y="5.9" width="2.8" height="1.4" fill="#ccc"/><path d="M157 9.6 L160 5.2" stroke="#eee" stroke-width="1.3"/><rect x="189.5" y="4" width="3" height="5.8" fill="none" stroke="#bbb" stroke-width="0.9"/><rect x="190.6" y="6.3" width="1" height="1" fill="#bbb"/><rect x="223" y="4" width="4.4" height="5.6" rx="0.6" fill="#ccc"/><rect x="223.8" y="4.8" width="2.8" height="1.2" fill="#333"/><path d="M249 4.2 L249 9.4 L253.6 9.4 M249.6 7.6 L251.2 6 L252.2 7 L253.6 5.6" fill="none" stroke="#ccc" stroke-width="0.8"/><path d="M283.6 4.4 L287.8 9.4 M287.8 4.4 L283.6 9.4" stroke="#eee" stroke-width="1.1"/><circle cx="317.3" cy="6.8" r="2.4" fill="#eee"/><rect x="316.9" y="6" width="0.9" height="2.4" fill="#1c1c1c"/><rect x="316.9" y="4.8" width="0.9" height="0.7" fill="#1c1c1c"/></svg></div><div class="a" style="left:0;top:13px;width:750px;height:1px;background:#0e1119"></div><div class="yl" style="left:-4px;top:16.4px">400 mV</div><div class="yl" style="left:-4px;top:56.4px">300 mV</div><div class="yl" style="left:-4px;top:99.3px">200 mV</div><div class="yl" style="left:-4px;top:142.2px">100 mV</div><div class="yl" style="left:-4px;top:185.1px">0 mV</div><div class="yl" style="left:-4px;top:228.0px">-100 mV</div><div class="yl" style="left:-4px;top:270.9px">-200 mV</div><div class="yl" style="left:-4px;top:313.8px">-300 mV</div><div class="yl" style="left:-4px;top:354.8px">-400 mV</div><div class="xl" style="left:27.5px;text-align:left">-250 ns</div><div class="xl" style="left:79.3px">-200 ns</div><div class="xl" style="left:151.1px">-150 ns</div><div class="xl" style="left:223.0px">-100 ns</div><div class="xl" style="left:294.8px">-50 ns</div><div class="xl" style="left:366.6px">0 ns</div><div class="xl" style="left:438.4px">50 ns</div><div class="xl" style="left:510.2px">100 ns</div><div class="xl" style="left:582.1px">150 ns</div><div class="xl" style="left:653.9px">200 ns</div><div class="xl" style="left:705.7px;text-align:right">250 ns</div><div class="a" style="left:1.9px;top:371.2px;font-size:5.2px;line-height:6px;font-weight:bold;color:#dde4ee">Measure</div><div class="a" style="left:0;top:376.3px;width:750px;height:6.6px;background:#262626"></div><div class="a" style="left:2px;top:377px;font-size:5.2px;line-height:6px;color:#e4e8ee">value</div><div class="a" style="left:2px;top:383.5px;font-size:5.2px;line-height:6px;color:#e4e8ee">status</div><div class="mt" style="left:60.0px;width:56px;top:371.2px;color:#e4e8ee">P1:slew(F2)</div><div class="mt" style="left:117.4px;width:56px;top:371.2px;color:#e4e8ee">P2:1/(P1)</div><div class="mt" style="left:174.9px;width:56px;top:371.2px;color:#686868">P3:slew(C2)</div><div class="mt" style="left:232.4px;width:56px;top:371.2px;color:#686868">P4- - -</div><div class="mt" style="left:289.8px;width:56px;top:371.2px;color:#686868">P5- - -</div><div class="mt" style="left:347.2px;width:56px;top:371.2px;color:#686868">P6- - -</div><div class="mt" style="left:404.7px;width:56px;top:371.2px;color:#686868">P7- - -</div><div class="mt" style="left:462.2px;width:56px;top:371.2px;color:#686868">P8- - -</div><div class="mt" style="left:519.6px;width:56px;top:371.2px;color:#686868">P9- - -</div><div class="mt" style="left:577.1px;width:56px;top:371.2px;color:#686868">P10- - -</div><div class="mt" style="left:634.5px;width:56px;top:371.2px;color:#686868">P11- - -</div><div class="mt" style="left:692.0px;width:56px;top:371.2px;color:#686868">P12- - -</div><div class="mt" style="left:60px;width:56px;top:377px">9.99125954 MV/s</div><div class="mt" style="left:117px;width:56px;top:377px">100.0874811 ns</div><div class="mt" style="left:60px;width:55.5px;top:383px"><span style="color:#c8c000;font-weight:bold">X</span> 0</div><div class="mt" style="left:117px;width:55.5px;top:383px"><span style="color:#c8c000;font-weight:bold">X</span> 0</div><div class="a" style="left:1.3px;top:389.4px;width:38.1px;height:25.2px;background:#484848"><div class="a" style="left:0;top:0;width:38.1px;height:6.6px;background:#e8e800"></div><div class="a" style="left:1.5px;top:0.4px;font-size:5.4px;line-height:6px;color:#111">C1</div><div class="a" style="right:1px;top:0.4px;font-size:5.4px;line-height:6px;color:#111;transform:scaleX(0.9);transform-origin:100% 0"></div><div class="a" style="right:0.7px;top:6.9px;font-size:5.3px;line-height:6px;color:#e4e8ee;transform:scaleX(0.95);transform-origin:100% 0">100 mV/div</div><div class="a" style="right:0.7px;top:12.8px;font-size:5.3px;line-height:6px;color:#e4e8ee;transform:scaleX(0.95);transform-origin:100% 0">0.00 mV ofst</div><div class="a" style="right:0.7px;top:18.3px;font-size:5.3px;line-height:6px;color:#e4e8ee;transform:scaleX(0.95);transform-origin:100% 0">352.834 kS</div></div><div class="a" style="left:12.8px;top:390px;width:25.4px;height:5.4px;background:#000"></div><div class="a" style="left:14px;top:390px;width:24px;color:#e8e000;font-size:5px;line-height:5.4px;transform:scaleX(0.86);transform-origin:0 0;-webkit-text-stroke:0">AVG|DC1M</div><div class="a" style="left:40.1px;top:389.4px;width:39.0px;height:25.2px;background:#2b4a68"><div class="a" style="left:0;top:0;width:39.0px;height:25.2px;border:1px solid #1c70c8;border-top:none"></div><div class="a" style="left:1px;top:0.3px;width:37.0px;height:6.3px;background:#f5b400"></div><div class="a" style="left:2.2px;top:0.4px;font-size:5.4px;line-height:6px;color:#222">F1</div><div class="a" style="right:1.6px;top:0.4px;font-size:5.4px;line-height:6px;color:#222;transform:scaleX(0.9);transform-origin:100% 0">demod(C1)</div><div class="a" style="right:1.4px;top:6.9px;font-size:5.3px;line-height:6px;color:#e4e8ee;transform:scaleX(0.95);transform-origin:100% 0">100 mV/div</div><div class="a" style="right:1.4px;top:12.8px;font-size:5.3px;line-height:6px;color:#e4e8ee;transform:scaleX(0.95);transform-origin:100% 0">50.0 ns/div</div><div class="a" style="right:1.4px;top:18.3px;font-size:5.3px;line-height:6px;color:#e4e8ee;transform:scaleX(0.95);transform-origin:100% 0">352.834 kS</div></div><div class="a" style="left:79.9px;top:389.4px;width:37.8px;height:25.2px;background:#484848"><div class="a" style="left:0;top:0;width:37.8px;height:6.6px;background:#f0588a"></div><div class="a" style="left:1.5px;top:0.4px;font-size:5.4px;line-height:6px;color:#5a1030">F2</div><div class="a" style="right:1px;top:0.4px;font-size:5.4px;line-height:6px;color:#5a1030;transform:scaleX(0.9);transform-origin:100% 0">ln(F1)</div><div class="a" style="right:0.7px;top:6.9px;font-size:5.3px;line-height:6px;color:#e4e8ee;transform:scaleX(0.95);transform-origin:100% 0">868e-3/div</div><div class="a" style="right:0.7px;top:12.8px;font-size:5.3px;line-height:6px;color:#e4e8ee;transform:scaleX(0.95);transform-origin:100% 0">50.0 ns/div</div><div class="a" style="right:0.7px;top:18.3px;font-size:5.3px;line-height:6px;color:#e4e8ee;transform:scaleX(0.95);transform-origin:100% 0">352.834 kS</div></div><svg class="a" style="left:0;top:0;-webkit-text-stroke:0" width="750" height="422"><rect x="119.3" y="389.8" width="37" height="24.6" fill="none" stroke="#a8a8a8" stroke-width="0.6" stroke-dasharray="0.7 0.8"/></svg><div class="a" style="left:134.4px;top:401.3px;width:5.4px;height:1.3px;background:#e4e4e4"></div><div class="a" style="left:136.45px;top:399.3px;width:1.3px;height:5.4px;background:#e4e4e4"></div><div class="a" style="left:641.9px;top:389.3px;width:21.9px;height:19.4px;background:#484848"></div><div class="a" style="left:641.9px;top:389.3px;width:21.9px;height:5.9px;background:#00e000;text-align:center;font-size:5.4px;line-height:6px;font-weight:bold;color:#111">HD</div><div class="a" style="left:641.9px;top:399px;width:21.9px;text-align:center;font-size:5.2px;line-height:6px;color:#e4e8ee">12 Bits</div><div class="a" style="left:665.4px;top:389.6px;width:43.6px;height:19.2px;background:#3e3e3e"></div><div class="a" style="left:665.4px;top:389.6px;width:43.6px;height:6px;background:#f4f4f4"></div><div class="a" style="left:666.5px;top:389.8px;font-size:5.4px;line-height:6px;color:#3a1a20">Timebase</div><div class="a" style="left:665.4px;top:389.8px;width:42.6px;text-align:right;font-size:5.4px;line-height:6px;color:#222">0 ns</div><div class="a" style="left:665.4px;top:396.6px;width:42.6px;text-align:right;font-size:5.2px;line-height:6px;color:#e4e8ee">50.0 ns/div</div><div class="a" style="left:666.5px;top:402.2px;font-size:5.2px;line-height:6px;color:#e4e8ee">5 kS</div><div class="a" style="left:665.4px;top:402.2px;width:42.6px;text-align:right;font-size:5.2px;line-height:6px;color:#e4e8ee">10 GS/s</div><div class="a" style="left:710.2px;top:389.6px;width:37.2px;height:19.2px;background:#3e3e3e"></div><div class="a" style="left:710.2px;top:389.6px;width:37.2px;height:6px;background:#f4f4f4"></div><div class="a" style="left:711px;top:389.8px;font-size:5.4px;line-height:6px;color:#3a1a20">Trigger</div><div class="a" style="left:730.6px;top:390.3px;width:7.4px;height:4.7px;border-radius:0.8px;background:#000;color:#eee;font-size:4.6px;line-height:4.7px;text-align:center">C1</div><div class="a" style="left:739.4px;top:390.3px;width:7.4px;height:4.7px;border-radius:0.8px;background:#000;color:#eee;font-size:4.6px;line-height:4.7px;text-align:center">DC</div><div class="a" style="left:711px;top:396.6px;font-size:5.2px;line-height:6px;color:#e4e8ee">Normal</div><div class="a" style="left:710.2px;top:396.6px;width:36.6px;text-align:right;font-size:5.2px;line-height:6px;color:#e4e8ee">0 mV</div><div class="a" style="left:711px;top:402.2px;font-size:5.2px;line-height:6px;color:#e4e8ee">Edge</div><div class="a" style="left:710.2px;top:402.2px;width:36.6px;text-align:right;font-size:5.2px;line-height:6px;color:#e4e8ee">Positive</div><div class="a" style="left:0;top:415px;width:750px;height:7px;background:#262626"></div><div class="a" style="left:2.6px;top:415.6px;font-size:5.3px;line-height:6.5px;font-weight:bold;color:#e8e8e8;transform:scaleX(0.88);transform-origin:0 0">TELEDYNE <span style="font-weight:normal;color:#cfcfcf">LECROY</span></div><div class="a" style="left:660px;top:415.8px;width:84px;text-align:right;font-size:5.2px;line-height:6px;color:#e4e8ee">12/21/2021 3:36:41 PM</div></body></html>
